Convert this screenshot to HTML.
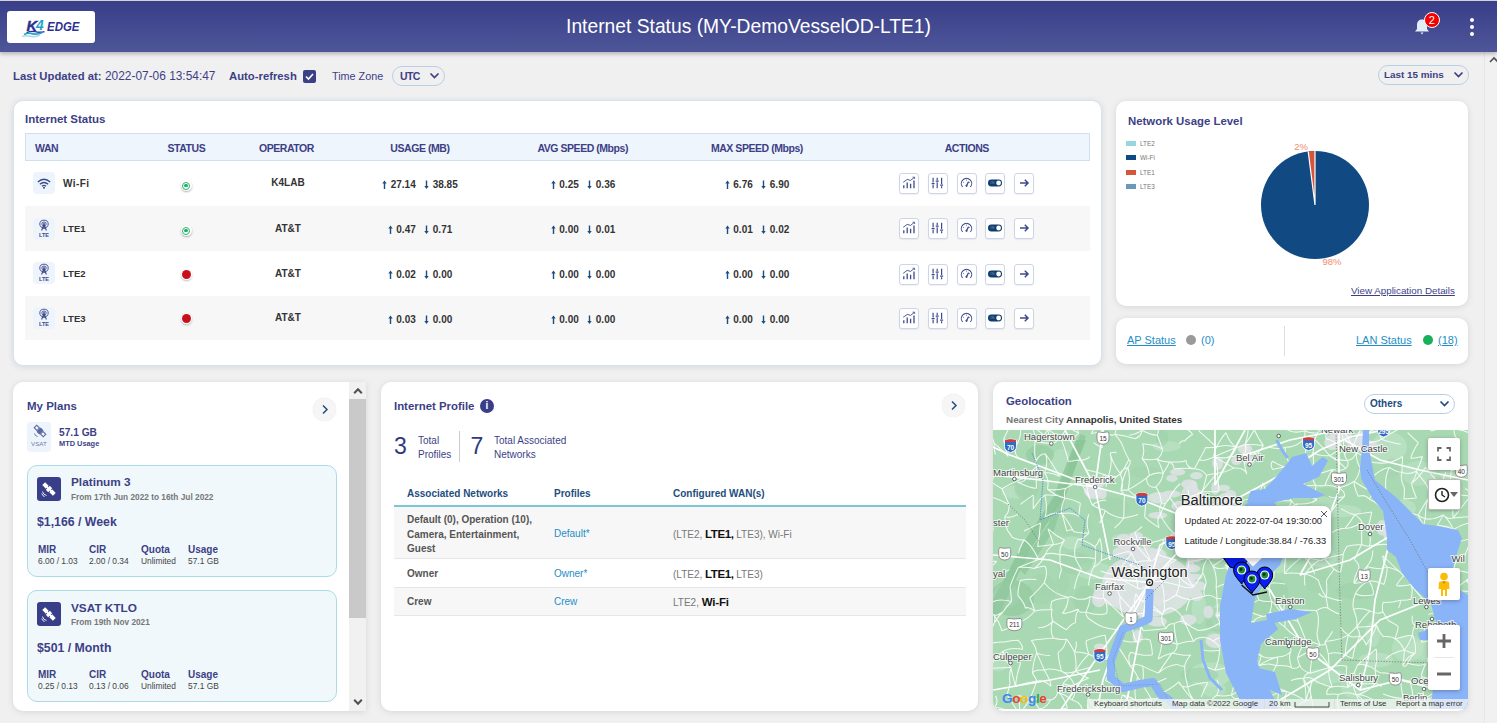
<!DOCTYPE html>
<html><head><meta charset="utf-8">
<style>
*{box-sizing:border-box;margin:0;padding:0}
html,body{width:1497px;height:723px;overflow:hidden}
body{background:#f0f0f0;font-family:"Liberation Sans",sans-serif;position:relative;color:#333}
.a{position:absolute;white-space:nowrap}
#topline{left:0;top:0;width:1497px;height:1px;background:#d8d8d8}
#hdr{left:0;top:1px;width:1497px;height:51px;background:linear-gradient(#383e88,#4e5699);box-shadow:0 2px 4px rgba(0,0,0,.25)}
#logo{left:7px;top:10px;width:88px;height:32px;background:#fff;border-radius:3px}
#title{left:0;top:13px;width:1497px;text-align:center;color:#fff;font-size:20.6px;line-height:24px;transform:scaleX(0.935);transform-origin:749px 0}
.card{position:absolute;background:#fff;border-radius:10px;box-shadow:0 1px 7px rgba(0,0,0,.11)}
.ttl{position:absolute;font-weight:bold;color:#3d3f86;font-size:11.5px;line-height:14px;white-space:nowrap}
#sb{left:1484px;top:52px;width:13px;height:671px;background:#f1f1f1;border-left:1px solid #e6e6e6}
.nv{color:#3d3f86}
.b{font-weight:bold}
/* table */
.th{position:absolute;top:133px;height:28px;left:25px;width:1065px;background:#eef5fc;border:1px solid #cfe0f1}
.thc{position:absolute;top:141.7px;font-size:10.5px;letter-spacing:-0.45px;font-weight:bold;color:#3d3f86;line-height:12px;white-space:nowrap}
.row{position:absolute;left:25px;width:1065px}
.g{background:#f7f7f7}
.wic{position:absolute;left:33px;width:22px;height:22px;background:#eef4fb;border-radius:4px}
.wn{position:absolute;left:63px;font-size:11px;font-weight:bold;color:#333;line-height:13px}
.dot{position:absolute;left:180.5px;width:11px;height:11px;border-radius:50%;background:#fff;box-shadow:0 1px 2px rgba(0,0,0,.3)}
.dot i{position:absolute;left:1.5px;top:1.5px;width:8px;height:8px;border-radius:50%;border:1.1px solid #22b565}.dot i:after{content:"";position:absolute;left:1.4px;top:1.4px;width:3.2px;height:3.2px;border-radius:50%;background:#1fae5f}
.dot.red{left:182px;width:9px;height:9px;background:#c8101a;box-shadow:0 0 0 1px #fff,0 1px 2px 1px rgba(0,0,0,.25)}
.op{position:absolute;font-size:10px;font-weight:bold;color:#333;line-height:12px;text-align:center;width:80px}
.num{position:absolute;font-size:10px;font-weight:bold;color:#333;line-height:12px;white-space:nowrap}
.ar{position:absolute;width:5px;height:9px}
.btn{position:absolute;width:20px;height:20.5px;border:1px solid #cfd5e8;border-radius:3px;background:#fff;box-shadow:0 1px 1px rgba(60,70,140,.08)}
</style></head><body>
<div id="topline" class="a"></div>
<div id="sb" class="a"><svg class="a" style="left:4px;top:4px" width="10" height="8" viewBox="0 0 10 8"><path d="M1 6 L5 2 L9 6" fill="none" stroke="#505050" stroke-width="1.6"/></svg></div>
<div id="hdr" class="a">
  <div id="logo" class="a">
    <svg width="88" height="32" viewBox="0 0 88 32">
      <text x="19.5" y="19.6" font-family="Liberation Sans" font-style="italic" font-weight="bold" font-size="14.8" fill="#2e3192" stroke="#2e3192" stroke-width="0.4">K</text>
      <text x="29" y="18.9" font-family="Liberation Sans" font-style="italic" font-weight="bold" font-size="13.8" fill="#1ea5c8">4</text>
      <text x="40" y="19.6" font-family="Liberation Sans" font-style="italic" font-weight="bold" font-size="13.4" fill="#2e3192" textLength="32.5" lengthAdjust="spacingAndGlyphs">EDGE</text>
      <path d="M19.5 21.8 Q24 19.8 28 20.6 Q33 21.8 37.5 20.6" fill="none" stroke="#2e3192" stroke-width="1.4"/>
      <path d="M17 23.6 Q21 21.6 25 22.6 Q30 24 35 21.8" fill="none" stroke="#1ea5c8" stroke-width="1.7"/>
      <path d="M15 25.6 Q19 24.2 23 25.2 Q28 26.6 33 24.2" fill="none" stroke="#a8d8f0" stroke-width="1.4"/>
    </svg>
  </div>
  <div id="title" class="a">Internet Status (MY-DemoVesselOD-LTE1)</div>
  <svg class="a" style="left:1412px;top:16px" width="20" height="20" viewBox="0 0 20 20">
    <path d="M10 2.5 C6.5 2.5 5 5 5 8 L5 12 L3 14.5 L17 14.5 L15 12 L15 8 C15 5 13.5 2.5 10 2.5 Z" fill="#e3edf8"/>
    <path d="M8.5 15.5 L11.5 15.5 L10 17.5 Z" fill="#e3edf8"/>
  </svg>
  <div class="a" style="left:1423.5px;top:10.5px;width:16.5px;height:16.5px;border-radius:50%;background:#f70000;border:1.3px solid #fff;color:#fff;font-size:11px;text-align:center;line-height:14px">2</div>
  <div class="a" style="left:1469.5px;top:16.5px;width:4px;height:4px;border-radius:50%;background:#fff"></div>
  <div class="a" style="left:1469.5px;top:23.5px;width:4px;height:4px;border-radius:50%;background:#fff"></div>
  <div class="a" style="left:1469.5px;top:30.5px;width:4px;height:4px;border-radius:50%;background:#fff"></div>
</div>

<!-- toolbar -->
<div class="a" style="left:13px;top:70px;font-size:11.3px;line-height:13px;color:#3d3f86"><b>Last Updated at:</b></div>
<div class="a" style="left:105px;top:70px;font-size:11.9px;line-height:13px;color:#3d3f86">2022-07-06 13:54:47</div>
<div class="a b" style="left:229px;top:70px;font-size:11.3px;line-height:13px;color:#3d3f86">Auto-refresh</div>
<div class="a" style="left:303px;top:70px;width:13px;height:13px;background:#3d3f86;border-radius:2px">
  <svg class="a" style="left:0;top:0" width="13" height="13" viewBox="0 0 13 13"><path d="M3 6.5 L5.5 9 L10 4" fill="none" stroke="#fff" stroke-width="1.6"/></svg>
</div>
<div class="a" style="left:332px;top:70px;font-size:10.8px;line-height:13px;color:#3d3f86">Time Zone</div>
<div class="a" style="left:392px;top:66px;width:53px;height:20px;border:1px solid #b9cfe6;border-radius:10px"></div>
<div class="a b" style="left:400px;top:70px;font-size:10.5px;line-height:12px;letter-spacing:-0.6px;color:#3d3f86">UTC</div>
<svg class="a" style="left:429px;top:72px" width="11" height="8" viewBox="0 0 11 8"><path d="M1.5 1.5 L5.5 5.5 L9.5 1.5" fill="none" stroke="#3d3f86" stroke-width="1.7"/></svg>

<div class="a" style="left:1378px;top:65px;width:91px;height:20px;border:1px solid #b9cfe6;border-radius:10px"></div>
<div class="a b" style="left:1384px;top:69px;font-size:9.9px;line-height:12px;color:#3d3f86">Last 15 mins</div>
<svg class="a" style="left:1453px;top:71px" width="11" height="8" viewBox="0 0 11 8"><path d="M1.5 1.5 L5.5 5.5 L9.5 1.5" fill="none" stroke="#3d3f86" stroke-width="1.7"/></svg>

<!-- ===== Internet Status card ===== -->
<div class="card" style="left:13px;top:100px;width:1089px;height:266px;border:1px solid #d5e3f1"></div>
<div class="ttl" style="left:25px;top:112px">Internet Status</div>
<div class="th"></div>
<div class="thc" style="left:35px">WAN</div>
<div class="thc" style="left:126.4px;width:120px;text-align:center">STATUS</div>
<div class="thc" style="left:226.5px;width:120px;text-align:center">OPERATOR</div>
<div class="thc" style="left:359.9px;width:120px;text-align:center">USAGE (MB)</div>
<div class="thc" style="left:522.7px;width:120px;text-align:center">AVG SPEED (Mbps)</div>
<div class="thc" style="left:696.9px;width:120px;text-align:center">MAX SPEED (Mbps)</div>
<div class="thc" style="left:906.8px;width:120px;text-align:center">ACTIONS</div>

<div class="row" style="top:206px;height:45px;background:#f7f7f7"></div>
<div class="row" style="top:296px;height:44px;background:#f7f7f7"></div>

<!-- ROWS -->
<div class="wic" style="top:172px"><svg class="a" style="left:4px;top:6px" width="14" height="11" viewBox="0 0 14 11"><path d="M0.8 4 Q7 -1.5 13.2 4" fill="none" stroke="#3d4a8a" stroke-width="1.4"/><path d="M2.8 6.2 Q7 2.6 11.2 6.2" fill="none" stroke="#3d4a8a" stroke-width="1.4"/><path d="M4.9 8.2 Q7 6.6 9.1 8.2" fill="none" stroke="#3d4a8a" stroke-width="1.4"/><circle cx="7" cy="9.8" r="1" fill="#3d4a8a"/></svg></div>
<div class="wn" style="top:176.7px;font-size:10px;letter-spacing:0.4px">Wi-Fi</div>
<div class="dot" style="top:180px"><i></i></div>
<div class="op" style="left:248px;top:177.4px">K4LAB</div>
<svg class="a" style="left:382.2px;top:179.89999999999998px" width="5" height="10" viewBox="0 0 5 10"><path d="M2.5 0.5 L0.3 3.5 L1.8 3.5 L1.8 9 L3.2 9 L3.2 3.5 L4.7 3.5 Z" fill="#1d4e7e"/></svg><div class="num" style="left:390.7px;top:178.7px">27.14</div><svg class="a" style="left:424.2px;top:179.89999999999998px" width="5" height="10" viewBox="0 0 5 10"><path d="M2.5 9 L0.3 6 L1.8 6 L1.8 0.5 L3.2 0.5 L3.2 6 L4.7 6 Z" fill="#1d4e7e"/></svg><div class="num" style="left:432.7px;top:178.7px">38.85</div>
<svg class="a" style="left:550.8px;top:179.89999999999998px" width="5" height="10" viewBox="0 0 5 10"><path d="M2.5 0.5 L0.3 3.5 L1.8 3.5 L1.8 9 L3.2 9 L3.2 3.5 L4.7 3.5 Z" fill="#1d4e7e"/></svg><div class="num" style="left:559.3px;top:178.7px">0.25</div><svg class="a" style="left:587.3px;top:179.89999999999998px" width="5" height="10" viewBox="0 0 5 10"><path d="M2.5 9 L0.3 6 L1.8 6 L1.8 0.5 L3.2 0.5 L3.2 6 L4.7 6 Z" fill="#1d4e7e"/></svg><div class="num" style="left:595.8px;top:178.7px">0.36</div>
<svg class="a" style="left:724.8px;top:179.89999999999998px" width="5" height="10" viewBox="0 0 5 10"><path d="M2.5 0.5 L0.3 3.5 L1.8 3.5 L1.8 9 L3.2 9 L3.2 3.5 L4.7 3.5 Z" fill="#1d4e7e"/></svg><div class="num" style="left:733.3px;top:178.7px">6.76</div><svg class="a" style="left:761.3px;top:179.89999999999998px" width="5" height="10" viewBox="0 0 5 10"><path d="M2.5 9 L0.3 6 L1.8 6 L1.8 0.5 L3.2 0.5 L3.2 6 L4.7 6 Z" fill="#1d4e7e"/></svg><div class="num" style="left:769.8px;top:178.7px">6.90</div>
<div class="btn" style="left:899px;top:173px"><svg class="a" style="left:2px;top:2px" width="14" height="14" viewBox="0 0 14 14"><path d="M1.8 12.2 V9.3 M5.2 12.2 V6.6 M8.6 12.2 V7.8 M12 12.2 V4.6" stroke="#3d4a8a" stroke-width="1.3"/><path d="M1.2 6.3 L5.2 3.4 L8.6 4.4 L12.2 1.5" fill="none" stroke="#3d4a8a" stroke-width="0.9"/><path d="M10.6 1.2 L12.6 1.2 L12.6 3" fill="none" stroke="#3d4a8a" stroke-width="0.8"/></svg></div>
<div class="btn" style="left:928px;top:173px"><svg class="a" style="left:2px;top:2px" width="14" height="14" viewBox="0 0 14 14"><path d="M2.1 1.8 V6.6 M2.1 8.8 V12.2 M6.2 1.8 V4.2 M6.2 6.3 V12.2 M10.6 1.8 V8 M10.6 10.2 V12.2" stroke="#3d4a8a" stroke-width="1.2"/><path d="M0.6 7.7 H3.6 M4.7 5.2 H7.7 M9.1 9.1 H12.1" stroke="#3d4a8a" stroke-width="1.3"/></svg></div>
<div class="btn" style="left:957px;top:173px"><svg class="a" style="left:2px;top:2px" width="14" height="14" viewBox="0 0 14 14"><path d="M2.6 11 A5.2 5.2 0 1 1 10.4 11" fill="none" stroke="#3d4a8a" stroke-width="1.1"/><path d="M6.5 9.6 L8.6 5.6" stroke="#3d4a8a" stroke-width="1.2"/><circle cx="6.5" cy="9.8" r="1.1" fill="#3d4a8a"/><path d="M3.2 6.2 L4 6.8 M6.5 3.6 V4.6 M9.8 6.2 L9 6.8" stroke="#3d4a8a" stroke-width="0.8"/></svg></div>
<div class="btn" style="left:985px;top:173px"><svg class="a" style="left:1px;top:4px" width="16" height="10" viewBox="0 0 16 10"><rect x="1" y="1.6" width="14" height="6.8" rx="3.4" fill="#0f3d6e"/><circle cx="11.6" cy="5" r="2.4" fill="#fff"/><text x="3" y="6.2" font-size="3" fill="#7f9ab8" font-family="Liberation Sans">ON</text></svg></div>
<div class="btn" style="left:1014px;top:173px"><svg class="a" style="left:3px;top:4px" width="12" height="10" viewBox="0 0 12 10"><path d="M2 5 H10 M6.8 1.8 L10 5 L6.8 8.2" fill="none" stroke="#3d4a8a" stroke-width="1.5"/></svg></div>
<div class="wic" style="top:218px"><svg class="a" style="left:0;top:0" width="22" height="22" viewBox="0 0 22 22"><ellipse cx="11" cy="6" rx="4.2" ry="3.8" fill="none" stroke="#3d4a8a" stroke-width="0.9"/><ellipse cx="11" cy="6" rx="2.2" ry="2" fill="none" stroke="#3d4a8a" stroke-width="0.9"/><circle cx="11" cy="6" r="0.9" fill="#3d4a8a"/><path d="M11 6.5 L8.6 12.5 M11 6.5 L13.4 12.5 M9.6 10.3 L12.4 10.3" stroke="#3d4a8a" stroke-width="1.1"/><text x="11" y="19.2" text-anchor="middle" font-family="Liberation Sans" font-weight="bold" font-size="5.6" fill="#3d4a8a">LTE</text></svg></div>
<div class="wn" style="top:222.2px;font-size:9.5px">LTE1</div>
<div class="dot" style="top:225px"><i></i></div>
<div class="op" style="left:248px;top:222.9px">AT&amp;T</div>
<svg class="a" style="left:387.8px;top:225.39999999999998px" width="5" height="10" viewBox="0 0 5 10"><path d="M2.5 0.5 L0.3 3.5 L1.8 3.5 L1.8 9 L3.2 9 L3.2 3.5 L4.7 3.5 Z" fill="#1d4e7e"/></svg><div class="num" style="left:396.3px;top:224.2px">0.47</div><svg class="a" style="left:424.3px;top:225.39999999999998px" width="5" height="10" viewBox="0 0 5 10"><path d="M2.5 9 L0.3 6 L1.8 6 L1.8 0.5 L3.2 0.5 L3.2 6 L4.7 6 Z" fill="#1d4e7e"/></svg><div class="num" style="left:432.8px;top:224.2px">0.71</div>
<svg class="a" style="left:550.8px;top:225.39999999999998px" width="5" height="10" viewBox="0 0 5 10"><path d="M2.5 0.5 L0.3 3.5 L1.8 3.5 L1.8 9 L3.2 9 L3.2 3.5 L4.7 3.5 Z" fill="#1d4e7e"/></svg><div class="num" style="left:559.3px;top:224.2px">0.00</div><svg class="a" style="left:587.3px;top:225.39999999999998px" width="5" height="10" viewBox="0 0 5 10"><path d="M2.5 9 L0.3 6 L1.8 6 L1.8 0.5 L3.2 0.5 L3.2 6 L4.7 6 Z" fill="#1d4e7e"/></svg><div class="num" style="left:595.8px;top:224.2px">0.01</div>
<svg class="a" style="left:724.8px;top:225.39999999999998px" width="5" height="10" viewBox="0 0 5 10"><path d="M2.5 0.5 L0.3 3.5 L1.8 3.5 L1.8 9 L3.2 9 L3.2 3.5 L4.7 3.5 Z" fill="#1d4e7e"/></svg><div class="num" style="left:733.3px;top:224.2px">0.01</div><svg class="a" style="left:761.3px;top:225.39999999999998px" width="5" height="10" viewBox="0 0 5 10"><path d="M2.5 9 L0.3 6 L1.8 6 L1.8 0.5 L3.2 0.5 L3.2 6 L4.7 6 Z" fill="#1d4e7e"/></svg><div class="num" style="left:769.8px;top:224.2px">0.02</div>
<div class="btn" style="left:899px;top:218px"><svg class="a" style="left:2px;top:2px" width="14" height="14" viewBox="0 0 14 14"><path d="M1.8 12.2 V9.3 M5.2 12.2 V6.6 M8.6 12.2 V7.8 M12 12.2 V4.6" stroke="#3d4a8a" stroke-width="1.3"/><path d="M1.2 6.3 L5.2 3.4 L8.6 4.4 L12.2 1.5" fill="none" stroke="#3d4a8a" stroke-width="0.9"/><path d="M10.6 1.2 L12.6 1.2 L12.6 3" fill="none" stroke="#3d4a8a" stroke-width="0.8"/></svg></div>
<div class="btn" style="left:928px;top:218px"><svg class="a" style="left:2px;top:2px" width="14" height="14" viewBox="0 0 14 14"><path d="M2.1 1.8 V6.6 M2.1 8.8 V12.2 M6.2 1.8 V4.2 M6.2 6.3 V12.2 M10.6 1.8 V8 M10.6 10.2 V12.2" stroke="#3d4a8a" stroke-width="1.2"/><path d="M0.6 7.7 H3.6 M4.7 5.2 H7.7 M9.1 9.1 H12.1" stroke="#3d4a8a" stroke-width="1.3"/></svg></div>
<div class="btn" style="left:957px;top:218px"><svg class="a" style="left:2px;top:2px" width="14" height="14" viewBox="0 0 14 14"><path d="M2.6 11 A5.2 5.2 0 1 1 10.4 11" fill="none" stroke="#3d4a8a" stroke-width="1.1"/><path d="M6.5 9.6 L8.6 5.6" stroke="#3d4a8a" stroke-width="1.2"/><circle cx="6.5" cy="9.8" r="1.1" fill="#3d4a8a"/><path d="M3.2 6.2 L4 6.8 M6.5 3.6 V4.6 M9.8 6.2 L9 6.8" stroke="#3d4a8a" stroke-width="0.8"/></svg></div>
<div class="btn" style="left:985px;top:218px"><svg class="a" style="left:1px;top:4px" width="16" height="10" viewBox="0 0 16 10"><rect x="1" y="1.6" width="14" height="6.8" rx="3.4" fill="#0f3d6e"/><circle cx="11.6" cy="5" r="2.4" fill="#fff"/><text x="3" y="6.2" font-size="3" fill="#7f9ab8" font-family="Liberation Sans">ON</text></svg></div>
<div class="btn" style="left:1014px;top:218px"><svg class="a" style="left:3px;top:4px" width="12" height="10" viewBox="0 0 12 10"><path d="M2 5 H10 M6.8 1.8 L10 5 L6.8 8.2" fill="none" stroke="#3d4a8a" stroke-width="1.5"/></svg></div>
<div class="wic" style="top:262px"><svg class="a" style="left:0;top:0" width="22" height="22" viewBox="0 0 22 22"><ellipse cx="11" cy="6" rx="4.2" ry="3.8" fill="none" stroke="#3d4a8a" stroke-width="0.9"/><ellipse cx="11" cy="6" rx="2.2" ry="2" fill="none" stroke="#3d4a8a" stroke-width="0.9"/><circle cx="11" cy="6" r="0.9" fill="#3d4a8a"/><path d="M11 6.5 L8.6 12.5 M11 6.5 L13.4 12.5 M9.6 10.3 L12.4 10.3" stroke="#3d4a8a" stroke-width="1.1"/><text x="11" y="19.2" text-anchor="middle" font-family="Liberation Sans" font-weight="bold" font-size="5.6" fill="#3d4a8a">LTE</text></svg></div>
<div class="wn" style="top:267.2px;font-size:9.5px">LTE2</div>
<div class="dot red" style="top:270px"></div>
<div class="op" style="left:248px;top:267.9px">AT&amp;T</div>
<svg class="a" style="left:387.8px;top:270.4px" width="5" height="10" viewBox="0 0 5 10"><path d="M2.5 0.5 L0.3 3.5 L1.8 3.5 L1.8 9 L3.2 9 L3.2 3.5 L4.7 3.5 Z" fill="#1d4e7e"/></svg><div class="num" style="left:396.3px;top:269.2px">0.02</div><svg class="a" style="left:424.3px;top:270.4px" width="5" height="10" viewBox="0 0 5 10"><path d="M2.5 9 L0.3 6 L1.8 6 L1.8 0.5 L3.2 0.5 L3.2 6 L4.7 6 Z" fill="#1d4e7e"/></svg><div class="num" style="left:432.8px;top:269.2px">0.00</div>
<svg class="a" style="left:550.8px;top:270.4px" width="5" height="10" viewBox="0 0 5 10"><path d="M2.5 0.5 L0.3 3.5 L1.8 3.5 L1.8 9 L3.2 9 L3.2 3.5 L4.7 3.5 Z" fill="#1d4e7e"/></svg><div class="num" style="left:559.3px;top:269.2px">0.00</div><svg class="a" style="left:587.3px;top:270.4px" width="5" height="10" viewBox="0 0 5 10"><path d="M2.5 9 L0.3 6 L1.8 6 L1.8 0.5 L3.2 0.5 L3.2 6 L4.7 6 Z" fill="#1d4e7e"/></svg><div class="num" style="left:595.8px;top:269.2px">0.00</div>
<svg class="a" style="left:724.8px;top:270.4px" width="5" height="10" viewBox="0 0 5 10"><path d="M2.5 0.5 L0.3 3.5 L1.8 3.5 L1.8 9 L3.2 9 L3.2 3.5 L4.7 3.5 Z" fill="#1d4e7e"/></svg><div class="num" style="left:733.3px;top:269.2px">0.00</div><svg class="a" style="left:761.3px;top:270.4px" width="5" height="10" viewBox="0 0 5 10"><path d="M2.5 9 L0.3 6 L1.8 6 L1.8 0.5 L3.2 0.5 L3.2 6 L4.7 6 Z" fill="#1d4e7e"/></svg><div class="num" style="left:769.8px;top:269.2px">0.00</div>
<div class="btn" style="left:899px;top:264px"><svg class="a" style="left:2px;top:2px" width="14" height="14" viewBox="0 0 14 14"><path d="M1.8 12.2 V9.3 M5.2 12.2 V6.6 M8.6 12.2 V7.8 M12 12.2 V4.6" stroke="#3d4a8a" stroke-width="1.3"/><path d="M1.2 6.3 L5.2 3.4 L8.6 4.4 L12.2 1.5" fill="none" stroke="#3d4a8a" stroke-width="0.9"/><path d="M10.6 1.2 L12.6 1.2 L12.6 3" fill="none" stroke="#3d4a8a" stroke-width="0.8"/></svg></div>
<div class="btn" style="left:928px;top:264px"><svg class="a" style="left:2px;top:2px" width="14" height="14" viewBox="0 0 14 14"><path d="M2.1 1.8 V6.6 M2.1 8.8 V12.2 M6.2 1.8 V4.2 M6.2 6.3 V12.2 M10.6 1.8 V8 M10.6 10.2 V12.2" stroke="#3d4a8a" stroke-width="1.2"/><path d="M0.6 7.7 H3.6 M4.7 5.2 H7.7 M9.1 9.1 H12.1" stroke="#3d4a8a" stroke-width="1.3"/></svg></div>
<div class="btn" style="left:957px;top:264px"><svg class="a" style="left:2px;top:2px" width="14" height="14" viewBox="0 0 14 14"><path d="M2.6 11 A5.2 5.2 0 1 1 10.4 11" fill="none" stroke="#3d4a8a" stroke-width="1.1"/><path d="M6.5 9.6 L8.6 5.6" stroke="#3d4a8a" stroke-width="1.2"/><circle cx="6.5" cy="9.8" r="1.1" fill="#3d4a8a"/><path d="M3.2 6.2 L4 6.8 M6.5 3.6 V4.6 M9.8 6.2 L9 6.8" stroke="#3d4a8a" stroke-width="0.8"/></svg></div>
<div class="btn" style="left:985px;top:264px"><svg class="a" style="left:1px;top:4px" width="16" height="10" viewBox="0 0 16 10"><rect x="1" y="1.6" width="14" height="6.8" rx="3.4" fill="#0f3d6e"/><circle cx="11.6" cy="5" r="2.4" fill="#fff"/><text x="3" y="6.2" font-size="3" fill="#7f9ab8" font-family="Liberation Sans">ON</text></svg></div>
<div class="btn" style="left:1014px;top:264px"><svg class="a" style="left:3px;top:4px" width="12" height="10" viewBox="0 0 12 10"><path d="M2 5 H10 M6.8 1.8 L10 5 L6.8 8.2" fill="none" stroke="#3d4a8a" stroke-width="1.5"/></svg></div>
<div class="wic" style="top:307px"><svg class="a" style="left:0;top:0" width="22" height="22" viewBox="0 0 22 22"><ellipse cx="11" cy="6" rx="4.2" ry="3.8" fill="none" stroke="#3d4a8a" stroke-width="0.9"/><ellipse cx="11" cy="6" rx="2.2" ry="2" fill="none" stroke="#3d4a8a" stroke-width="0.9"/><circle cx="11" cy="6" r="0.9" fill="#3d4a8a"/><path d="M11 6.5 L8.6 12.5 M11 6.5 L13.4 12.5 M9.6 10.3 L12.4 10.3" stroke="#3d4a8a" stroke-width="1.1"/><text x="11" y="19.2" text-anchor="middle" font-family="Liberation Sans" font-weight="bold" font-size="5.6" fill="#3d4a8a">LTE</text></svg></div>
<div class="wn" style="top:311.7px;font-size:9.5px">LTE3</div>
<div class="dot red" style="top:314px"></div>
<div class="op" style="left:248px;top:312.4px">AT&amp;T</div>
<svg class="a" style="left:387.8px;top:314.9px" width="5" height="10" viewBox="0 0 5 10"><path d="M2.5 0.5 L0.3 3.5 L1.8 3.5 L1.8 9 L3.2 9 L3.2 3.5 L4.7 3.5 Z" fill="#1d4e7e"/></svg><div class="num" style="left:396.3px;top:313.7px">0.03</div><svg class="a" style="left:424.3px;top:314.9px" width="5" height="10" viewBox="0 0 5 10"><path d="M2.5 9 L0.3 6 L1.8 6 L1.8 0.5 L3.2 0.5 L3.2 6 L4.7 6 Z" fill="#1d4e7e"/></svg><div class="num" style="left:432.8px;top:313.7px">0.00</div>
<svg class="a" style="left:550.8px;top:314.9px" width="5" height="10" viewBox="0 0 5 10"><path d="M2.5 0.5 L0.3 3.5 L1.8 3.5 L1.8 9 L3.2 9 L3.2 3.5 L4.7 3.5 Z" fill="#1d4e7e"/></svg><div class="num" style="left:559.3px;top:313.7px">0.00</div><svg class="a" style="left:587.3px;top:314.9px" width="5" height="10" viewBox="0 0 5 10"><path d="M2.5 9 L0.3 6 L1.8 6 L1.8 0.5 L3.2 0.5 L3.2 6 L4.7 6 Z" fill="#1d4e7e"/></svg><div class="num" style="left:595.8px;top:313.7px">0.00</div>
<svg class="a" style="left:724.8px;top:314.9px" width="5" height="10" viewBox="0 0 5 10"><path d="M2.5 0.5 L0.3 3.5 L1.8 3.5 L1.8 9 L3.2 9 L3.2 3.5 L4.7 3.5 Z" fill="#1d4e7e"/></svg><div class="num" style="left:733.3px;top:313.7px">0.00</div><svg class="a" style="left:761.3px;top:314.9px" width="5" height="10" viewBox="0 0 5 10"><path d="M2.5 9 L0.3 6 L1.8 6 L1.8 0.5 L3.2 0.5 L3.2 6 L4.7 6 Z" fill="#1d4e7e"/></svg><div class="num" style="left:769.8px;top:313.7px">0.00</div>
<div class="btn" style="left:899px;top:308px"><svg class="a" style="left:2px;top:2px" width="14" height="14" viewBox="0 0 14 14"><path d="M1.8 12.2 V9.3 M5.2 12.2 V6.6 M8.6 12.2 V7.8 M12 12.2 V4.6" stroke="#3d4a8a" stroke-width="1.3"/><path d="M1.2 6.3 L5.2 3.4 L8.6 4.4 L12.2 1.5" fill="none" stroke="#3d4a8a" stroke-width="0.9"/><path d="M10.6 1.2 L12.6 1.2 L12.6 3" fill="none" stroke="#3d4a8a" stroke-width="0.8"/></svg></div>
<div class="btn" style="left:928px;top:308px"><svg class="a" style="left:2px;top:2px" width="14" height="14" viewBox="0 0 14 14"><path d="M2.1 1.8 V6.6 M2.1 8.8 V12.2 M6.2 1.8 V4.2 M6.2 6.3 V12.2 M10.6 1.8 V8 M10.6 10.2 V12.2" stroke="#3d4a8a" stroke-width="1.2"/><path d="M0.6 7.7 H3.6 M4.7 5.2 H7.7 M9.1 9.1 H12.1" stroke="#3d4a8a" stroke-width="1.3"/></svg></div>
<div class="btn" style="left:957px;top:308px"><svg class="a" style="left:2px;top:2px" width="14" height="14" viewBox="0 0 14 14"><path d="M2.6 11 A5.2 5.2 0 1 1 10.4 11" fill="none" stroke="#3d4a8a" stroke-width="1.1"/><path d="M6.5 9.6 L8.6 5.6" stroke="#3d4a8a" stroke-width="1.2"/><circle cx="6.5" cy="9.8" r="1.1" fill="#3d4a8a"/><path d="M3.2 6.2 L4 6.8 M6.5 3.6 V4.6 M9.8 6.2 L9 6.8" stroke="#3d4a8a" stroke-width="0.8"/></svg></div>
<div class="btn" style="left:985px;top:308px"><svg class="a" style="left:1px;top:4px" width="16" height="10" viewBox="0 0 16 10"><rect x="1" y="1.6" width="14" height="6.8" rx="3.4" fill="#0f3d6e"/><circle cx="11.6" cy="5" r="2.4" fill="#fff"/><text x="3" y="6.2" font-size="3" fill="#7f9ab8" font-family="Liberation Sans">ON</text></svg></div>
<div class="btn" style="left:1014px;top:308px"><svg class="a" style="left:3px;top:4px" width="12" height="10" viewBox="0 0 12 10"><path d="M2 5 H10 M6.8 1.8 L10 5 L6.8 8.2" fill="none" stroke="#3d4a8a" stroke-width="1.5"/></svg></div>
<!-- /ROWS -->


<!-- ===== Network Usage card ===== -->
<div class="card" style="left:1116px;top:101px;width:352px;height:204.5px"></div>
<div class="ttl" style="left:1128px;top:114px;font-size:11.4px">Network Usage Level</div>
<div class="a" style="left:1126px;top:141px;width:10px;height:5px;background:#97d6df"></div>
<div class="a" style="left:1140px;top:139px;font-size:6.4px;line-height:9px;color:#777">LTE2</div>
<div class="a" style="left:1126px;top:155px;width:10px;height:5px;background:#114a82"></div>
<div class="a" style="left:1140px;top:153px;font-size:6.4px;line-height:9px;color:#777">Wi-Fi</div>
<div class="a" style="left:1126px;top:170px;width:10px;height:5px;background:#d4563c"></div>
<div class="a" style="left:1140px;top:168px;font-size:6.4px;line-height:9px;color:#777">LTE1</div>
<div class="a" style="left:1126px;top:184px;width:10px;height:5px;background:#6b9ab8"></div>
<div class="a" style="left:1140px;top:182px;font-size:6.4px;line-height:9px;color:#777">LTE3</div>
<svg class="a" style="left:1255px;top:138px" width="120" height="132" viewBox="0 0 120 132">
  <circle cx="60" cy="67" r="54" fill="#114a82"/>
  <path d="M60 67 L60 13 A54 54 0 0 0 53.2 13.4 Z" fill="#d4563c"/>
  <path d="M60 67 L60 13 M60 67 L53.2 13.4" stroke="#fff" stroke-width="1.2"/>
  <text x="46" y="12" font-family="Liberation Sans" font-size="9.5" fill="#f28b6c" text-anchor="middle">2%</text>
  <text x="77" y="127" font-family="Liberation Sans" font-size="9.5" fill="#f28b6c" text-anchor="middle">98%</text>
</svg>
<div class="a" style="left:1351px;top:285px;font-size:9.8px;line-height:12px;color:#3d3f86;text-decoration:underline">View Application Details</div>

<!-- ===== AP / LAN status ===== -->
<div class="card" style="left:1116px;top:318px;width:352px;height:46px"></div>
<div class="a" style="left:1127px;top:334px;font-size:11px;line-height:13px;color:#1f8ec6;text-decoration:underline">AP Status</div>
<div class="a" style="left:1186px;top:335px;width:10px;height:10px;border-radius:50%;background:#9a9a9a"></div>
<div class="a" style="left:1201px;top:334px;font-size:11px;line-height:13px;color:#1f8ec6">(0)</div>
<div class="a" style="left:1284px;top:326px;width:1px;height:30px;background:#ddd"></div>
<div class="a" style="left:1356px;top:334px;font-size:11px;line-height:13px;color:#1f8ec6;text-decoration:underline">LAN Status</div>
<div class="a" style="left:1423px;top:335px;width:10px;height:10px;border-radius:50%;background:#17b15a"></div>
<div class="a" style="left:1438px;top:334px;font-size:11px;line-height:13px;color:#1f8ec6;text-decoration:underline">(18)</div>

<!-- ===== My Plans ===== -->
<div class="card" style="left:13px;top:382px;width:353px;height:329px;overflow:hidden;border-radius:10px 0 0 10px">
  <div class="a" style="left:336px;top:0;width:17px;height:329px;background:#f1f1f1"></div>
  <div class="a" style="left:336px;top:17px;width:17px;height:219px;background:#c9c9c9"></div>
  <svg class="a" style="left:340px;top:5px" width="10" height="8" viewBox="0 0 10 8"><path d="M1.2 6.2 L5 2.2 L8.8 6.2" fill="none" stroke="#505050" stroke-width="2"/></svg>
  <svg class="a" style="left:340px;top:316px" width="10" height="8" viewBox="0 0 10 8"><path d="M1.2 1.8 L5 5.8 L8.8 1.8" fill="none" stroke="#505050" stroke-width="2"/></svg>
</div>
<div class="ttl" style="left:27px;top:399px;font-size:11.5px">My Plans</div>
<div class="a" style="left:313px;top:398px;width:23px;height:23px;border-radius:50%;background:#f6f6f6;box-shadow:0 0 1px rgba(0,0,0,.15)">
  <svg class="a" style="left:7px;top:6px" width="10" height="11" viewBox="0 0 10 11"><path d="M3 1.5 L7 5.5 L3 9.5" fill="none" stroke="#1d4e7e" stroke-width="1.5"/></svg>
</div>
<div class="a" style="left:27px;top:422px;width:24px;height:30px;background:#eef4fb;border-radius:3px"><svg class="a" style="left:5.5px;top:2px" width="14" height="14" viewBox="0 0 14 14"><g transform="rotate(-45 7 7)" fill="none" stroke="#5a6aa0" stroke-width="1.1"><rect x="5.2" y="0.6" width="3.6" height="4" /><rect x="5.2" y="9.4" width="3.6" height="4"/><rect x="4.6" y="5.6" width="4.8" height="2.8" fill="#5a6aa0"/></g><path d="M1.5 9.5 Q2 12 4.5 12.5" fill="none" stroke="#5a6aa0" stroke-width="0.9"/></svg>
  <div class="a" style="left:4px;top:18px;font-size:6.2px;line-height:8px;color:#6a78a8">VSAT</div>
</div>
<div class="a b" style="left:59px;top:427px;font-size:10.2px;line-height:12px;color:#3d3f86">57.1 GB</div>
<div class="a b" style="left:59px;top:439px;font-size:7.4px;line-height:10px;color:#3d3f86">MTD Usage</div>

<!-- plan 1 -->
<div class="a" style="left:27px;top:465px;width:310px;height:112px;background:#f0f8fb;border:1px solid #a9dbe8;border-radius:10px"></div>
<div class="a" style="left:37px;top:477px;width:24px;height:24px;background:#383e88;border-radius:3px"><svg class="a" style="left:4px;top:4px" width="16" height="16" viewBox="0 0 16 16"><g transform="rotate(-45 8 8)" fill="#fff"><rect x="6" y="0.5" width="4" height="5"/><rect x="6" y="10.5" width="4" height="5"/><rect x="5.2" y="6.3" width="5.6" height="3.4"/><rect x="7.2" y="4" width="1.6" height="8"/></g><path d="M1.5 10.5 Q2.2 13.8 5.5 14.5 M0.8 12.5 Q1.6 15.2 3.6 15.6" fill="none" stroke="#fff" stroke-width="0.9"/></svg></div>
<div class="a b" style="left:71px;top:475px;font-size:11.8px;line-height:14px;color:#3d3f86">Platinum 3</div>
<div class="a b" style="left:71px;top:492px;font-size:8.3px;line-height:11px;color:#777">From 17th Jun 2022 to 16th Jul 2022</div>
<div class="a b" style="left:37px;top:515px;font-size:12.3px;line-height:15px;color:#3d3f86">$1,166 / Week</div>
<div class="a b" style="left:38px;top:543.5px;font-size:10px;line-height:12px;color:#3d3f86">MIR</div>
<div class="a b" style="left:89px;top:543.5px;font-size:10px;line-height:12px;color:#3d3f86">CIR</div>
<div class="a b" style="left:141px;top:543.5px;font-size:10px;line-height:12px;color:#3d3f86">Quota</div>
<div class="a b" style="left:188px;top:543.5px;font-size:10px;line-height:12px;color:#3d3f86">Usage</div>
<div class="a" style="left:38px;top:556px;font-size:8.4px;line-height:11px;color:#444">6.00 / 1.03</div>
<div class="a" style="left:89px;top:556px;font-size:8.4px;line-height:11px;color:#444">2.00 / 0.34</div>
<div class="a" style="left:141px;top:556px;font-size:8.4px;line-height:11px;color:#444">Unlimited</div>
<div class="a" style="left:188px;top:556px;font-size:8.4px;line-height:11px;color:#444">57.1 GB</div>

<!-- plan 2 -->
<div class="a" style="left:27px;top:590px;width:310px;height:112px;background:#f0f8fb;border:1px solid #a9dbe8;border-radius:10px"></div>
<div class="a" style="left:37px;top:602px;width:24px;height:24px;background:#383e88;border-radius:3px"><svg class="a" style="left:4px;top:4px" width="16" height="16" viewBox="0 0 16 16"><g transform="rotate(-45 8 8)" fill="#fff"><rect x="6" y="0.5" width="4" height="5"/><rect x="6" y="10.5" width="4" height="5"/><rect x="5.2" y="6.3" width="5.6" height="3.4"/><rect x="7.2" y="4" width="1.6" height="8"/></g><path d="M1.5 10.5 Q2.2 13.8 5.5 14.5 M0.8 12.5 Q1.6 15.2 3.6 15.6" fill="none" stroke="#fff" stroke-width="0.9"/></svg></div>
<div class="a b" style="left:71px;top:601px;font-size:11.8px;line-height:14px;color:#3d3f86">VSAT KTLO</div>
<div class="a b" style="left:71px;top:617px;font-size:8.3px;line-height:11px;color:#777">From 19th Nov 2021</div>
<div class="a b" style="left:37px;top:641px;font-size:12.3px;line-height:15px;color:#3d3f86">$501 / Month</div>
<div class="a b" style="left:38px;top:668.5px;font-size:10px;line-height:12px;color:#3d3f86">MIR</div>
<div class="a b" style="left:89px;top:668.5px;font-size:10px;line-height:12px;color:#3d3f86">CIR</div>
<div class="a b" style="left:141px;top:668.5px;font-size:10px;line-height:12px;color:#3d3f86">Quota</div>
<div class="a b" style="left:188px;top:668.5px;font-size:10px;line-height:12px;color:#3d3f86">Usage</div>
<div class="a" style="left:38px;top:681px;font-size:8.4px;line-height:11px;color:#444">0.25 / 0.13</div>
<div class="a" style="left:89px;top:681px;font-size:8.4px;line-height:11px;color:#444">0.13 / 0.06</div>
<div class="a" style="left:141px;top:681px;font-size:8.4px;line-height:11px;color:#444">Unlimited</div>
<div class="a" style="left:188px;top:681px;font-size:8.4px;line-height:11px;color:#444">57.1 GB</div>

<!-- ===== Internet Profile ===== -->
<div class="card" style="left:381px;top:382px;width:597px;height:329px"></div>
<div class="ttl" style="left:394px;top:399px;font-size:11.4px">Internet Profile</div>
<div class="a" style="left:480px;top:399px;width:14px;height:14px;border-radius:50%;background:#383e88;color:#fff;font-size:10px;font-weight:bold;text-align:center;line-height:14px">i</div>
<div class="a" style="left:942px;top:394px;width:23px;height:23px;border-radius:50%;background:#f6f6f6;box-shadow:0 0 1px rgba(0,0,0,.15)">
  <svg class="a" style="left:7px;top:6px" width="10" height="11" viewBox="0 0 10 11"><path d="M3 1.5 L7 5.5 L3 9.5" fill="none" stroke="#1d4e7e" stroke-width="1.5"/></svg>
</div>
<div class="a" style="left:394px;top:433px;font-size:23px;line-height:26px;color:#2d3a80">3</div>
<div class="a" style="left:418px;top:434px;font-size:10px;line-height:13.5px;color:#3d3f86;white-space:normal">Total<br>Profiles</div>
<div class="a" style="left:459px;top:431px;width:1px;height:31px;background:#ccc"></div>
<div class="a" style="left:470.5px;top:433px;font-size:23px;line-height:26px;color:#2d3a80">7</div>
<div class="a" style="left:494px;top:434px;font-size:10px;line-height:13.5px;color:#3d3f86;white-space:normal">Total Associated<br>Networks</div>

<div class="a b" style="left:407px;top:488px;font-size:10px;line-height:12px;color:#1d4e7e">Associated Networks</div>
<div class="a b" style="left:554px;top:488px;font-size:10px;line-height:12px;color:#1d4e7e">Profiles</div>
<div class="a b" style="left:673px;top:488px;font-size:10px;line-height:12px;color:#1d4e7e">Configured WAN(s)</div>
<div class="a" style="left:394px;top:505px;width:572px;height:2px;background:#7cc7d3"></div>
<div class="a" style="left:394px;top:507px;width:572px;height:52px;background:#f7f7f7;border-bottom:1px solid #e6e6e6"></div>
<div class="a" style="left:394px;top:559px;width:572px;height:29px;background:#fff;border-bottom:1px solid #e6e6e6"></div>
<div class="a" style="left:394px;top:588px;width:572px;height:28px;background:#f7f7f7;border-bottom:1px solid #e6e6e6"></div>
<div class="a b" style="left:407px;top:513px;font-size:10px;line-height:14.5px;color:#555">Default (0), Operation (10),<br>Camera, Entertainment,<br>Guest</div>
<div class="a" style="left:554px;top:528px;font-size:10px;line-height:12px;color:#1f8ec6">Default*</div>
<div class="a" style="left:673px;top:528px;font-size:10px;line-height:12px;color:#777">(LTE2, <span style="color:#111;font-size:11.5px;font-weight:bold;letter-spacing:-0.4px">LTE1,</span> LTE3), Wi-Fi</div>
<div class="a b" style="left:407px;top:568px;font-size:10px;line-height:12px;color:#555">Owner</div>
<div class="a" style="left:554px;top:568px;font-size:10px;line-height:12px;color:#1f8ec6">Owner*</div>
<div class="a" style="left:673px;top:568px;font-size:10px;line-height:12px;color:#777">(LTE2, <span style="color:#111;font-size:11.5px;font-weight:bold;letter-spacing:-0.4px">LTE1,</span> LTE3)</div>
<div class="a b" style="left:407px;top:596px;font-size:10px;line-height:12px;color:#555">Crew</div>
<div class="a" style="left:554px;top:596px;font-size:10px;line-height:12px;color:#1f8ec6">Crew</div>
<div class="a" style="left:673px;top:596px;font-size:10px;line-height:12px;color:#777">LTE2, <span style="color:#111;font-size:11.5px;font-weight:bold;letter-spacing:-0.2px">Wi-Fi</span></div>

<!-- ===== Geolocation ===== -->
<div class="card" style="left:993px;top:382px;width:475px;height:329px;overflow:hidden">
  <div class="a" style="left:0;top:48px;width:475px;height:279px;background:#acd9b5;overflow:hidden"><!-- MAP --><svg class="a" style="left:0;top:0" width="475" height="281" viewBox="0 0 475 281"><rect width="475" height="281" fill="#a9d9b3"/><ellipse cx="153.8" cy="42.4" rx="16.4" ry="5.8" fill="#a3d3ad" opacity="0.6"/><ellipse cx="173.7" cy="16.3" rx="14.1" ry="5.4" fill="#c2e5c9" opacity="0.6"/><ellipse cx="198.6" cy="67.6" rx="14.8" ry="5.7" fill="#a3d3ad" opacity="0.6"/><ellipse cx="450.0" cy="177.2" rx="15.3" ry="5.7" fill="#c2e5c9" opacity="0.6"/><ellipse cx="23.6" cy="62.1" rx="14.9" ry="6.5" fill="#c2e5c9" opacity="0.6"/><ellipse cx="68.5" cy="33.1" rx="10.9" ry="14.0" fill="#bde2c4" opacity="0.6"/><ellipse cx="49.0" cy="160.5" rx="9.0" ry="6.1" fill="#a3d3ad" opacity="0.6"/><ellipse cx="268.1" cy="173.9" rx="13.9" ry="10.8" fill="#9fd0aa" opacity="0.6"/><ellipse cx="221.2" cy="259.5" rx="11.8" ry="7.7" fill="#bde2c4" opacity="0.6"/><ellipse cx="332.0" cy="68.6" rx="15.2" ry="10.8" fill="#9fd0aa" opacity="0.6"/><ellipse cx="346.5" cy="80.9" rx="21.7" ry="6.3" fill="#c2e5c9" opacity="0.6"/><ellipse cx="78.4" cy="96.1" rx="20.9" ry="9.6" fill="#a3d3ad" opacity="0.6"/><ellipse cx="363.2" cy="161.0" rx="20.0" ry="8.5" fill="#9fd0aa" opacity="0.6"/><ellipse cx="282.3" cy="163.0" rx="13.3" ry="14.2" fill="#9fd0aa" opacity="0.6"/><ellipse cx="225.2" cy="186.6" rx="7.0" ry="12.7" fill="#c2e5c9" opacity="0.6"/><ellipse cx="135.2" cy="108.4" rx="16.7" ry="5.2" fill="#c2e5c9" opacity="0.6"/><ellipse cx="168.8" cy="171.7" rx="13.9" ry="7.4" fill="#9fd0aa" opacity="0.6"/><ellipse cx="61.4" cy="69.6" rx="12.3" ry="14.6" fill="#a3d3ad" opacity="0.6"/><ellipse cx="79.0" cy="112.9" rx="10.4" ry="6.5" fill="#c2e5c9" opacity="0.6"/><ellipse cx="410.4" cy="78.2" rx="12.6" ry="8.9" fill="#c2e5c9" opacity="0.6"/><ellipse cx="454.9" cy="42.4" rx="8.8" ry="7.6" fill="#bde2c4" opacity="0.6"/><ellipse cx="5.7" cy="233.5" rx="8.9" ry="8.1" fill="#bde2c4" opacity="0.6"/><ellipse cx="199.0" cy="103.8" rx="15.1" ry="15.5" fill="#a3d3ad" opacity="0.6"/><ellipse cx="216.9" cy="244.7" rx="21.2" ry="12.5" fill="#c2e5c9" opacity="0.6"/><ellipse cx="189.1" cy="110.7" rx="13.7" ry="9.4" fill="#bde2c4" opacity="0.6"/><ellipse cx="32.0" cy="58.7" rx="8.6" ry="8.7" fill="#a3d3ad" opacity="0.6"/><ellipse cx="48.6" cy="159.3" rx="14.6" ry="15.4" fill="#a3d3ad" opacity="0.6"/><ellipse cx="33.4" cy="58.4" rx="12.0" ry="12.0" fill="#9fd0aa" opacity="0.6"/><ellipse cx="286.1" cy="133.2" rx="7.8" ry="10.4" fill="#c2e5c9" opacity="0.6"/><ellipse cx="228.2" cy="87.6" rx="8.3" ry="13.2" fill="#9fd0aa" opacity="0.6"/><ellipse cx="227.3" cy="194.5" rx="14.3" ry="7.3" fill="#9fd0aa" opacity="0.6"/><ellipse cx="69.6" cy="152.6" rx="6.4" ry="10.8" fill="#a3d3ad" opacity="0.6"/><ellipse cx="330.7" cy="73.4" rx="11.9" ry="6.8" fill="#bde2c4" opacity="0.6"/><ellipse cx="253.0" cy="218.9" rx="11.3" ry="7.5" fill="#bde2c4" opacity="0.6"/><ellipse cx="382.9" cy="230.0" rx="17.8" ry="7.5" fill="#c2e5c9" opacity="0.6"/><ellipse cx="168.9" cy="8.1" rx="6.4" ry="8.1" fill="#9fd0aa" opacity="0.6"/><ellipse cx="92.0" cy="170.0" rx="11.5" ry="13.9" fill="#9fd0aa" opacity="0.6"/><ellipse cx="453.6" cy="102.5" rx="9.5" ry="7.5" fill="#bde2c4" opacity="0.6"/><ellipse cx="160.4" cy="135.6" rx="21.8" ry="11.7" fill="#a3d3ad" opacity="0.6"/><ellipse cx="227.7" cy="183.5" rx="18.8" ry="5.9" fill="#a3d3ad" opacity="0.6"/><ellipse cx="432.1" cy="219.8" rx="18.0" ry="10.3" fill="#bde2c4" opacity="0.6"/><ellipse cx="206.1" cy="178.7" rx="7.4" ry="15.4" fill="#c2e5c9" opacity="0.6"/><ellipse cx="220.0" cy="208.9" rx="7.4" ry="6.7" fill="#bde2c4" opacity="0.6"/><ellipse cx="13.1" cy="166.0" rx="13.4" ry="12.2" fill="#c2e5c9" opacity="0.6"/><ellipse cx="312.2" cy="98.5" rx="14.8" ry="6.4" fill="#a3d3ad" opacity="0.6"/><ellipse cx="379.7" cy="204.1" rx="7.6" ry="13.2" fill="#bde2c4" opacity="0.6"/><ellipse cx="206.1" cy="245.0" rx="19.2" ry="7.3" fill="#9fd0aa" opacity="0.6"/><ellipse cx="101.1" cy="140.8" rx="18.2" ry="8.6" fill="#c2e5c9" opacity="0.6"/><ellipse cx="396.2" cy="17.1" rx="17.8" ry="14.9" fill="#c2e5c9" opacity="0.6"/><ellipse cx="392.9" cy="246.8" rx="8.1" ry="6.7" fill="#a3d3ad" opacity="0.6"/><ellipse cx="414.6" cy="218.2" rx="15.7" ry="13.5" fill="#bde2c4" opacity="0.6"/><ellipse cx="81.9" cy="133.1" rx="17.6" ry="11.1" fill="#9fd0aa" opacity="0.6"/><ellipse cx="324.1" cy="149.1" rx="13.7" ry="13.5" fill="#a3d3ad" opacity="0.6"/><ellipse cx="118.0" cy="77.8" rx="18.4" ry="10.6" fill="#a3d3ad" opacity="0.6"/><ellipse cx="361.0" cy="256.4" rx="13.1" ry="11.7" fill="#bde2c4" opacity="0.6"/><ellipse cx="329.0" cy="127.1" rx="14.5" ry="10.3" fill="#bde2c4" opacity="0.6"/><ellipse cx="332.1" cy="246.3" rx="21.1" ry="7.9" fill="#bde2c4" opacity="0.6"/><ellipse cx="399.0" cy="38.5" rx="7.9" ry="9.9" fill="#a3d3ad" opacity="0.6"/><ellipse cx="318.8" cy="120.4" rx="9.4" ry="8.3" fill="#a3d3ad" opacity="0.6"/><ellipse cx="426.1" cy="43.4" rx="17.5" ry="12.3" fill="#bde2c4" opacity="0.6"/><path d="M0.0 170.0 L29.0 115.0 L60.0 68.0 L83.0 10.0 L93.0 10.0 L69.0 70.0 L37.0 120.0 L7.0 182.0 L0.0 195.0 Z" fill="#87c194" opacity="0.75"/><path d="M25.0 138.0 L55.0 95.0 L73.0 44.0 L87.0 4.0 L93.0 6.0 L79.0 48.0 L61.0 100.0 L32.0 145.0 Z" fill="#8cc598" opacity="0.7"/><ellipse cx="19" cy="168" rx="22" ry="18" fill="#93c99f" opacity="0.7"/><ellipse cx="47" cy="25" rx="14" ry="10" fill="#93c99f" opacity="0.6"/><ellipse cx="155" cy="155" rx="46" ry="32" fill="#e1e4e6" opacity="0.85"/><ellipse cx="154.6" cy="166.6" rx="6.8" ry="6.7" fill="#dfe2e5" opacity="0.85"/><ellipse cx="215.4" cy="182.0" rx="5.0" ry="6.3" fill="#dfe2e5" opacity="0.85"/><ellipse cx="164.0" cy="191.6" rx="10.0" ry="5.0" fill="#dfe2e5" opacity="0.85"/><ellipse cx="126.1" cy="164.1" rx="4.6" ry="4.8" fill="#dfe2e5" opacity="0.85"/><ellipse cx="134.6" cy="176.6" rx="8.2" ry="4.9" fill="#dfe2e5" opacity="0.85"/><ellipse cx="125.9" cy="150.7" rx="9.8" ry="3.6" fill="#dfe2e5" opacity="0.85"/><ellipse cx="177.0" cy="144.2" rx="9.3" ry="3.4" fill="#dfe2e5" opacity="0.85"/><ellipse cx="144.6" cy="206.8" rx="5.1" ry="6.8" fill="#dfe2e5" opacity="0.85"/><ellipse cx="183.9" cy="108.9" rx="8.1" ry="7.7" fill="#dfe2e5" opacity="0.85"/><ellipse cx="119.0" cy="170.3" rx="7.1" ry="5.5" fill="#dfe2e5" opacity="0.85"/><ellipse cx="141.8" cy="170.9" rx="8.8" ry="3.9" fill="#dfe2e5" opacity="0.85"/><ellipse cx="176.9" cy="140.9" rx="4.1" ry="3.4" fill="#dfe2e5" opacity="0.85"/><ellipse cx="151.8" cy="187.1" rx="5.3" ry="4.3" fill="#dfe2e5" opacity="0.85"/><ellipse cx="158.8" cy="155.6" rx="10.0" ry="5.1" fill="#dfe2e5" opacity="0.85"/><ellipse cx="197.1" cy="135.3" rx="4.3" ry="6.5" fill="#dfe2e5" opacity="0.85"/><ellipse cx="240.5" cy="128.0" rx="5.6" ry="3.9" fill="#dfe2e5" opacity="0.85"/><ellipse cx="199.9" cy="138.5" rx="7.2" ry="4.0" fill="#dfe2e5" opacity="0.85"/><ellipse cx="105.7" cy="165.5" rx="5.6" ry="7.0" fill="#dfe2e5" opacity="0.85"/><ellipse cx="164.6" cy="152.8" rx="4.1" ry="5.5" fill="#dfe2e5" opacity="0.85"/><ellipse cx="196.7" cy="148.9" rx="5.5" ry="5.2" fill="#dfe2e5" opacity="0.85"/><ellipse cx="127.4" cy="122.6" rx="7.9" ry="5.7" fill="#dfe2e5" opacity="0.85"/><ellipse cx="226.0" cy="110.3" rx="5.8" ry="4.1" fill="#dfe2e5" opacity="0.85"/><ellipse cx="158.0" cy="169.5" rx="9.3" ry="6.6" fill="#dfe2e5" opacity="0.85"/><ellipse cx="222.4" cy="211.0" rx="9.9" ry="7.2" fill="#dfe2e5" opacity="0.85"/><ellipse cx="203.9" cy="156.1" rx="9.3" ry="5.2" fill="#dfe2e5" opacity="0.85"/><ellipse cx="203.7" cy="165.6" rx="6.3" ry="5.5" fill="#dfe2e5" opacity="0.85"/><ellipse cx="201.5" cy="146.9" rx="8.2" ry="3.2" fill="#dfe2e5" opacity="0.85"/><ellipse cx="165.9" cy="171.2" rx="4.0" ry="4.8" fill="#dfe2e5" opacity="0.85"/><ellipse cx="106.8" cy="216.7" rx="5.9" ry="3.2" fill="#dfe2e5" opacity="0.85"/><ellipse cx="173.1" cy="141.2" rx="5.1" ry="4.7" fill="#dfe2e5" opacity="0.85"/><ellipse cx="179.5" cy="163.2" rx="7.9" ry="4.2" fill="#dfe2e5" opacity="0.85"/><ellipse cx="157.5" cy="142.2" rx="8.9" ry="3.7" fill="#dfe2e5" opacity="0.85"/><ellipse cx="125.1" cy="140.0" rx="5.8" ry="6.1" fill="#dfe2e5" opacity="0.85"/><ellipse cx="230.9" cy="184.8" rx="9.1" ry="3.8" fill="#dfe2e5" opacity="0.85"/><ellipse cx="202.9" cy="125.7" rx="7.6" ry="6.8" fill="#dfe2e5" opacity="0.85"/><ellipse cx="147.5" cy="124.3" rx="5.7" ry="6.1" fill="#dfe2e5" opacity="0.85"/><ellipse cx="195.1" cy="189.8" rx="8.3" ry="5.6" fill="#dfe2e5" opacity="0.85"/><ellipse cx="105.9" cy="169.7" rx="7.0" ry="7.5" fill="#dfe2e5" opacity="0.85"/><ellipse cx="155.8" cy="120.6" rx="8.9" ry="3.1" fill="#dfe2e5" opacity="0.85"/><ellipse cx="130.7" cy="111.8" rx="8.3" ry="7.8" fill="#dfe2e5" opacity="0.85"/><ellipse cx="200.4" cy="56.7" rx="4.3" ry="6.2" fill="#dfe2e5" opacity="0.85"/><ellipse cx="230.5" cy="58.1" rx="6.7" ry="3.3" fill="#dfe2e5" opacity="0.85"/><ellipse cx="237.6" cy="64.3" rx="5.5" ry="4.3" fill="#dfe2e5" opacity="0.85"/><ellipse cx="197.8" cy="63.6" rx="9.6" ry="7.5" fill="#dfe2e5" opacity="0.85"/><ellipse cx="232.6" cy="72.7" rx="8.5" ry="5.4" fill="#dfe2e5" opacity="0.85"/><ellipse cx="224.6" cy="33.2" rx="5.4" ry="6.8" fill="#dfe2e5" opacity="0.85"/><ellipse cx="211.4" cy="85.0" rx="6.8" ry="7.2" fill="#dfe2e5" opacity="0.85"/><ellipse cx="255.7" cy="78.3" rx="5.7" ry="3.2" fill="#dfe2e5" opacity="0.85"/><ellipse cx="195.8" cy="54.1" rx="7.6" ry="4.7" fill="#dfe2e5" opacity="0.85"/><ellipse cx="184.7" cy="42.0" rx="7.7" ry="3.7" fill="#dfe2e5" opacity="0.85"/><ellipse cx="178.3" cy="64.0" rx="9.8" ry="3.5" fill="#dfe2e5" opacity="0.85"/><ellipse cx="212.8" cy="80.2" rx="8.3" ry="4.4" fill="#dfe2e5" opacity="0.85"/><ellipse cx="165.3" cy="67.8" rx="10.0" ry="5.7" fill="#dfe2e5" opacity="0.85"/><ellipse cx="203.0" cy="68.3" rx="6.8" ry="4.4" fill="#dfe2e5" opacity="0.85"/><ellipse cx="233.4" cy="70.8" rx="10.0" ry="8.0" fill="#dfe2e5" opacity="0.85"/><ellipse cx="164.8" cy="85.3" rx="9.6" ry="3.4" fill="#dfe2e5" opacity="0.85"/><ellipse cx="242.0" cy="76.3" rx="5.6" ry="4.8" fill="#dfe2e5" opacity="0.85"/><ellipse cx="178.9" cy="48.3" rx="5.7" ry="3.6" fill="#dfe2e5" opacity="0.85"/><ellipse cx="187.6" cy="76.1" rx="9.3" ry="5.0" fill="#dfe2e5" opacity="0.85"/><ellipse cx="240.1" cy="94.9" rx="8.1" ry="5.0" fill="#dfe2e5" opacity="0.85"/><ellipse cx="203.3" cy="45.6" rx="6.3" ry="3.6" fill="#dfe2e5" opacity="0.85"/><ellipse cx="196.2" cy="74.4" rx="6.0" ry="5.0" fill="#dfe2e5" opacity="0.85"/><ellipse cx="222.3" cy="58.1" rx="4.1" ry="6.7" fill="#dfe2e5" opacity="0.85"/><ellipse cx="206.8" cy="67.9" rx="6.3" ry="7.3" fill="#dfe2e5" opacity="0.85"/><ellipse cx="165.3" cy="125.9" rx="8.5" ry="7.3" fill="#dfe2e5" opacity="0.85"/><ellipse cx="139.2" cy="120.4" rx="8.0" ry="6.2" fill="#dfe2e5" opacity="0.85"/><ellipse cx="159.7" cy="134.1" rx="6.6" ry="4.6" fill="#dfe2e5" opacity="0.85"/><ellipse cx="143.2" cy="105.0" rx="6.6" ry="3.1" fill="#dfe2e5" opacity="0.85"/><ellipse cx="140.9" cy="110.4" rx="9.3" ry="5.8" fill="#dfe2e5" opacity="0.85"/><ellipse cx="141.5" cy="120.9" rx="9.6" ry="5.1" fill="#dfe2e5" opacity="0.85"/><ellipse cx="134.9" cy="115.3" rx="9.2" ry="5.4" fill="#dfe2e5" opacity="0.85"/><ellipse cx="153.4" cy="113.0" rx="5.0" ry="5.1" fill="#dfe2e5" opacity="0.85"/><ellipse cx="100.9" cy="62.8" rx="8.4" ry="6.3" fill="#dfe2e5" opacity="0.85"/><ellipse cx="97.7" cy="61.1" rx="6.9" ry="6.3" fill="#dfe2e5" opacity="0.85"/><ellipse cx="109.3" cy="63.9" rx="4.5" ry="5.5" fill="#dfe2e5" opacity="0.85"/><ellipse cx="105.4" cy="53.1" rx="6.7" ry="4.7" fill="#dfe2e5" opacity="0.85"/><ellipse cx="102.4" cy="53.7" rx="7.3" ry="4.2" fill="#dfe2e5" opacity="0.85"/><ellipse cx="256.1" cy="30.7" rx="5.9" ry="4.8" fill="#dfe2e5" opacity="0.85"/><ellipse cx="253.7" cy="21.9" rx="4.1" ry="7.4" fill="#dfe2e5" opacity="0.85"/><ellipse cx="243.4" cy="30.6" rx="5.3" ry="4.4" fill="#dfe2e5" opacity="0.85"/><ellipse cx="252.1" cy="19.1" rx="7.4" ry="4.8" fill="#dfe2e5" opacity="0.85"/><ellipse cx="344.9" cy="3.2" rx="8.7" ry="7.2" fill="#dfe2e5" opacity="0.85"/><ellipse cx="378.7" cy="17.0" rx="6.3" ry="6.2" fill="#dfe2e5" opacity="0.85"/><ellipse cx="340.2" cy="12.2" rx="8.9" ry="7.8" fill="#dfe2e5" opacity="0.85"/><ellipse cx="363.0" cy="14.5" rx="8.6" ry="7.0" fill="#dfe2e5" opacity="0.85"/><ellipse cx="369.1" cy="8.6" rx="4.4" ry="7.7" fill="#dfe2e5" opacity="0.85"/><ellipse cx="368.5" cy="6.8" rx="6.8" ry="5.2" fill="#dfe2e5" opacity="0.85"/><ellipse cx="354.2" cy="5.8" rx="4.9" ry="7.9" fill="#dfe2e5" opacity="0.85"/><ellipse cx="373.7" cy="17.1" rx="8.2" ry="7.2" fill="#dfe2e5" opacity="0.85"/><ellipse cx="391.0" cy="98.7" rx="8.7" ry="3.0" fill="#dfe2e5" opacity="0.85"/><ellipse cx="394.5" cy="104.6" rx="4.2" ry="6.6" fill="#dfe2e5" opacity="0.85"/><ellipse cx="397.2" cy="98.4" rx="7.2" ry="5.2" fill="#dfe2e5" opacity="0.85"/><ellipse cx="389.2" cy="97.7" rx="5.8" ry="7.7" fill="#dfe2e5" opacity="0.85"/><path d="M-17.4 -16.6 Q-6.2 -9.0 1.0 -9.4 M-10.8 -5.5 Q-9.1 -1.8 -4.9 -5.2 M-10.8 -5.5 Q-13.5 7.0 -13.6 19.5 M-13.6 19.5 Q-13.6 20.4 -16.4 26.0 M-16.4 26.0 Q-15.8 36.2 -10.3 39.2 M-10.3 39.2 Q-8.1 44.0 -0.6 44.3 M-10.3 39.2 Q-13.9 51.6 -13.7 56.5 M-13.7 56.5 Q-6.8 51.2 -2.0 51.7 M-19.2 69.0 Q-14.2 71.1 -12.4 79.1 M-12.4 79.1 Q-6.2 83.1 -3.4 85.7 M-12.4 79.1 Q-13.8 87.6 -17.4 102.2 M-17.4 102.2 Q-11.0 107.5 -12.4 107.4 M-12.4 107.4 Q-14.8 112.6 -17.0 125.2 M-17.0 125.2 Q-8.2 132.0 3.7 131.3 M-17.0 125.2 Q-16.7 133.1 -15.4 139.9 M-15.4 139.9 Q-8.3 141.6 -0.6 135.7 M-15.4 139.9 Q-11.7 146.8 -11.8 156.4 M-15.5 166.9 Q-9.3 166.3 -0.9 172.2 M-15.5 166.9 Q-16.6 175.1 -19.4 179.7 M-19.4 179.7 Q-7.4 178.5 0.7 184.8 M-19.4 179.7 Q-17.7 184.4 -10.2 191.2 M-10.2 191.2 Q-4.4 200.8 -2.1 213.3 M-14.0 206.7 Q-6.9 208.9 -2.1 213.3 M-14.0 206.7 Q-15.5 217.0 -11.1 220.6 M-11.1 220.6 Q-10.9 225.9 -4.5 226.3 M-14.4 235.4 Q-11.1 236.3 -3.3 238.5 M-9.7 247.7 Q-13.4 254.6 -12.6 267.2 M-9.6 279.8 Q-7.8 279.4 1.4 277.2 M-9.5 289.1 Q-7.6 292.7 1.4 293.0 M1.0 -9.4 Q2.9 -8.2 12.6 -14.4 M1.0 -9.4 Q-0.1 -8.3 -4.9 -5.2 M1.0 -9.4 Q11.6 -5.7 17.3 -4.8 M-4.9 -5.2 Q-1.6 4.0 1.1 13.1 M1.1 13.1 Q0.9 19.7 2.3 24.5 M1.1 13.1 Q10.6 21.6 15.2 26.5 M-0.6 44.3 Q1.6 48.3 -2.0 51.7 M-2.0 51.7 Q5.4 56.8 9.0 58.7 M-2.0 51.7 Q-2.7 59.5 -4.6 66.3 M-4.6 66.3 Q5.3 68.6 16.1 74.7 M-4.6 66.3 Q-0.3 73.6 -3.4 85.7 M0.3 97.6 Q-1.2 106.4 -2.1 114.5 M3.7 131.3 Q1.6 133.6 -0.6 135.7 M-4.6 149.4 Q1.0 158.3 -0.9 172.2 M-4.6 149.4 Q4.9 145.5 16.4 139.6 M-0.9 172.2 Q5.2 168.2 18.5 171.5 M0.7 184.8 Q2.4 186.7 10.0 182.0 M0.7 184.8 Q3.6 189.5 -1.3 199.0 M0.7 184.8 Q6.5 191.6 8.6 200.7 M-1.3 199.0 Q2.4 188.4 10.0 182.0 M-2.1 213.3 Q5.1 211.6 11.8 212.1 M-2.1 213.3 Q-0.8 218.6 -4.5 226.3 M-4.5 226.3 Q-0.7 230.3 -3.3 238.5 M-3.3 238.5 Q11.2 237.5 18.0 237.6 M-3.3 238.5 Q1.5 227.0 10.2 221.1 M2.6 265.7 Q6.0 273.6 1.4 277.2 M1.4 277.2 Q9.8 278.0 10.3 279.0 M1.4 277.2 Q-2.3 287.8 1.4 293.0 M1.4 277.2 Q9.5 286.7 15.6 293.8 M12.6 -14.4 Q12.8 -5.9 17.3 -4.8 M17.3 -4.8 Q22.5 -6.1 27.2 -4.3 M17.3 -4.8 Q15.0 -0.1 10.6 9.2 M10.6 9.2 Q16.7 15.8 23.3 15.4 M10.6 9.2 Q11.6 17.7 15.2 26.5 M12.2 47.0 Q21.9 43.6 33.4 47.2 M9.0 58.7 Q14.1 70.0 16.1 74.7 M9.0 58.7 Q18.8 52.4 33.4 47.2 M16.1 74.7 Q16.3 82.9 11.8 86.4 M11.8 86.4 Q15.0 89.1 25.1 84.4 M11.8 86.4 Q12.3 96.7 15.1 101.4 M15.1 101.4 Q18.6 105.7 18.9 107.2 M18.9 107.2 Q28.1 110.9 31.1 109.7 M17.0 157.2 Q18.4 165.6 18.5 171.5 M17.0 157.2 Q18.7 150.7 25.3 137.4 M18.5 171.5 Q13.1 176.5 10.0 182.0 M8.6 200.7 Q19.1 197.4 23.2 193.3 M11.8 212.1 Q14.9 210.8 25.2 210.3 M10.2 221.1 Q17.8 216.8 29.6 219.6 M10.2 221.1 Q10.5 225.9 18.0 237.6 M18.0 237.6 Q15.7 246.5 17.1 253.1 M18.0 237.6 Q18.8 243.1 22.5 256.2 M17.1 253.1 Q15.5 259.8 14.1 264.8 M14.1 264.8 Q21.3 276.7 26.6 284.1 M10.3 279.0 Q22.0 284.6 26.6 284.1 M10.3 279.0 Q11.5 287.6 15.6 293.8 M28.5 -17.7 Q31.9 -16.4 43.1 -10.4 M28.5 -17.7 Q30.6 -12.2 27.2 -4.3 M27.2 -4.3 Q34.4 -1.6 38.6 -4.7 M27.2 -4.3 Q29.1 6.1 23.3 15.4 M23.3 15.4 Q20.3 22.4 24.8 27.1 M33.4 47.2 Q36.6 42.3 43.8 36.6 M33.4 47.2 Q31.4 53.4 24.4 52.0 M24.4 52.0 Q37.8 58.6 43.5 58.3 M27.6 74.3 Q36.2 67.7 40.3 64.9 M31.0 100.9 Q40.9 96.4 47.5 92.9 M31.1 109.7 Q26.0 118.9 25.6 123.4 M31.1 109.7 Q39.5 115.7 45.5 129.5 M25.3 137.4 Q36.4 137.0 41.0 138.6 M25.3 137.4 Q31.5 135.1 45.5 129.5 M27.3 150.5 Q34.2 148.6 43.3 149.4 M27.3 150.5 Q24.4 161.1 25.1 165.6 M25.1 165.6 Q32.3 174.2 32.5 178.6 M32.5 178.6 Q33.9 175.8 41.8 181.0 M23.2 193.3 Q34.8 189.9 41.8 181.0 M25.2 210.3 Q29.6 214.5 29.6 219.6 M27.6 232.9 Q23.5 244.6 22.5 256.2 M22.5 256.2 Q32.4 253.0 43.8 251.1 M25.0 265.4 Q34.2 267.7 37.1 268.7 M25.0 265.4 Q26.8 270.9 26.6 284.1 M26.6 284.1 Q35.0 272.9 37.1 268.7 M25.1 289.1 Q34.5 296.8 36.7 296.9 M43.1 -10.4 Q49.0 -11.1 59.3 -12.4 M38.6 -4.7 Q43.1 6.5 42.1 10.5 M38.6 -4.7 Q53.5 7.1 60.9 13.3 M42.1 10.5 Q48.1 13.5 60.9 13.3 M42.1 10.5 Q40.8 24.5 43.1 31.0 M42.1 10.5 Q50.8 8.3 54.8 -1.0 M43.1 31.0 Q46.3 23.7 52.2 23.7 M43.1 31.0 Q41.7 32.4 43.8 36.6 M43.8 36.6 Q43.0 47.8 43.5 58.3 M40.3 64.9 Q40.3 75.9 40.2 79.0 M40.2 79.0 Q47.1 68.3 51.9 65.1 M47.5 92.9 Q46.5 106.2 44.6 116.6 M44.6 116.6 Q53.2 115.4 60.7 114.6 M45.5 129.5 Q48.0 129.5 52.4 124.3 M41.0 138.6 Q50.4 135.6 52.3 136.4 M41.0 138.6 Q49.1 132.8 52.4 124.3 M36.8 168.0 Q40.0 175.0 41.8 181.0 M36.8 168.0 Q46.1 159.2 51.2 152.7 M41.8 181.0 Q47.9 179.3 59.4 179.8 M45.3 197.8 Q56.1 197.2 59.7 191.0 M38.2 210.4 Q52.3 208.6 60.5 208.0 M38.2 210.4 Q42.6 215.6 43.7 222.9 M43.7 222.9 Q48.9 225.5 57.2 225.5 M43.7 222.9 Q39.9 232.7 39.5 243.4 M43.7 222.9 Q48.6 233.5 51.4 240.3 M39.5 243.4 Q41.5 238.9 51.4 240.3 M39.5 243.4 Q42.9 248.2 43.8 251.1 M43.8 251.1 Q51.4 249.7 58.1 256.3 M43.8 251.1 Q41.2 258.3 37.1 268.7 M37.1 268.7 Q45.4 268.8 57.5 269.9 M37.1 268.7 Q41.6 270.6 46.2 279.1 M46.2 279.1 Q54.0 283.5 57.3 281.3 M46.2 279.1 Q53.9 278.2 57.5 269.9 M36.7 296.9 Q45.5 293.4 52.7 293.7 M59.3 -12.4 Q58.0 -2.9 54.8 -1.0 M54.8 -1.0 Q55.5 9.0 60.9 13.3 M54.8 -1.0 Q61.2 3.7 68.5 10.1 M60.9 13.3 Q68.4 8.2 74.8 -3.8 M52.2 23.7 Q55.8 30.7 51.5 42.9 M52.2 23.7 Q58.6 32.1 66.6 46.2 M51.5 42.9 Q56.9 42.1 66.6 46.2 M51.5 42.9 Q56.4 49.3 54.5 59.0 M54.5 59.0 Q60.9 61.2 73.8 57.9 M54.5 59.0 Q63.2 66.3 71.8 68.1 M51.9 65.1 Q64.5 64.2 71.8 68.1 M51.9 65.1 Q54.9 76.6 52.1 87.4 M52.1 87.4 Q59.7 81.8 68.8 83.5 M54.9 98.8 Q58.1 106.9 60.7 114.6 M54.9 98.8 Q62.3 105.7 71.6 109.9 M60.7 114.6 Q69.3 113.7 71.6 109.9 M60.7 114.6 Q54.5 118.5 52.4 124.3 M52.4 124.3 Q56.9 122.2 67.2 124.8 M52.3 136.4 Q55.2 143.3 51.2 152.7 M51.2 152.7 Q59.8 163.8 75.3 167.6 M58.8 171.2 Q64.8 168.9 75.3 167.6 M58.8 171.2 Q56.7 179.3 59.4 179.8 M59.4 179.8 Q57.2 182.8 59.7 191.0 M59.7 191.0 Q69.6 197.9 73.5 199.7 M59.7 191.0 Q56.2 201.2 60.5 208.0 M60.5 208.0 Q68.7 210.4 73.4 208.9 M51.4 240.3 Q56.7 237.2 68.5 241.3 M51.4 240.3 Q57.4 250.0 58.1 256.3 M57.5 269.9 Q63.3 268.9 64.9 261.9 M57.3 281.3 Q64.1 280.0 74.6 278.0 M57.3 281.3 Q58.6 288.8 52.7 293.7 M52.7 293.7 Q59.8 289.9 72.4 289.4 M70.7 -19.0 Q70.0 -13.9 74.8 -3.8 M74.8 -3.8 Q76.6 -1.5 85.7 3.1 M68.5 10.1 Q70.2 9.6 78.8 9.2 M68.5 10.1 Q74.1 23.9 75.2 31.5 M75.2 31.5 Q78.6 31.5 85.3 30.1 M73.8 57.9 Q81.6 52.6 88.2 53.7 M73.8 57.9 Q70.4 60.2 71.8 68.1 M71.8 68.1 Q79.5 69.3 87.4 73.2 M71.8 68.1 Q67.2 78.4 68.8 83.5 M68.8 83.5 Q79.4 81.9 86.0 86.4 M68.8 83.5 Q70.5 88.6 73.8 101.1 M68.8 83.5 Q75.5 91.9 80.9 101.7 M73.8 101.1 Q80.1 98.0 80.9 101.7 M71.6 109.9 Q65.5 118.5 67.2 124.8 M67.2 124.8 Q71.5 123.9 82.1 127.2 M67.2 124.8 Q66.1 132.7 68.5 140.0 M68.5 140.0 Q65.6 147.9 66.5 148.5 M75.3 167.6 Q76.3 165.2 83.8 169.0 M75.3 167.6 Q74.7 177.1 69.4 183.3 M69.4 183.3 Q74.7 183.9 85.3 179.1 M73.5 199.7 Q78.6 193.2 82.6 192.7 M73.4 208.9 Q71.9 218.2 65.2 222.4 M73.4 208.9 Q76.2 212.3 81.6 222.1 M65.2 222.4 Q65.3 228.6 68.5 241.3 M68.5 241.3 Q74.1 244.7 82.6 241.2 M68.5 241.3 Q77.3 245.3 81.4 255.0 M70.0 253.7 Q78.1 256.5 81.4 255.0 M70.0 253.7 Q70.9 259.3 64.9 261.9 M70.0 253.7 Q72.4 250.5 82.6 241.2 M64.9 261.9 Q72.2 264.6 79.0 269.9 M64.9 261.9 Q70.6 266.4 74.6 278.0 M64.9 261.9 Q72.1 257.7 81.4 255.0 M72.4 289.4 Q80.5 292.7 84.2 296.1 M86.8 -9.7 Q82.6 -3.5 85.7 3.1 M85.7 3.1 Q81.3 7.3 78.8 9.2 M85.3 30.1 Q93.2 30.8 96.6 26.6 M88.2 53.7 Q95.1 63.5 99.3 75.0 M87.4 73.2 Q85.8 83.4 86.0 86.4 M80.9 101.7 Q86.8 103.2 95.9 103.1 M85.2 109.3 Q92.0 110.2 102.1 116.7 M85.2 109.3 Q80.3 117.4 82.1 127.2 M85.2 109.3 Q89.2 110.1 95.9 103.1 M82.1 127.2 Q95.3 127.2 102.4 128.6 M82.1 127.2 Q83.2 131.1 88.5 139.5 M88.5 139.5 Q83.5 146.5 81.3 159.1 M83.8 169.0 Q93.4 170.1 97.1 166.5 M85.3 179.1 Q85.2 183.3 93.0 181.9 M85.3 179.1 Q81.9 186.4 82.6 192.7 M82.9 211.5 Q84.3 214.8 81.6 222.1 M81.6 222.1 Q86.8 221.5 95.8 224.3 M81.6 222.1 Q83.8 233.2 82.6 241.2 M82.6 241.2 Q91.7 239.1 98.4 237.0 M82.6 241.2 Q92.2 247.7 95.8 248.0 M82.6 241.2 Q88.3 231.2 95.8 224.3 M81.4 255.0 Q85.8 252.3 95.8 248.0 M81.4 255.0 Q83.8 262.3 79.0 269.9 M81.4 255.0 Q92.5 260.5 96.5 269.6 M79.0 269.9 Q88.1 272.1 89.1 279.5 M89.1 279.5 Q88.9 284.0 84.2 296.1 M84.2 296.1 Q96.4 297.3 101.3 296.3 M102.4 -16.7 Q103.6 -7.8 98.4 3.9 M98.4 3.9 Q99.6 3.1 108.1 1.8 M100.6 12.6 Q103.5 15.2 109.5 17.4 M94.1 40.1 Q107.9 43.0 115.5 46.3 M93.4 53.0 Q94.9 66.4 99.3 75.0 M93.4 53.0 Q107.9 50.7 115.5 46.3 M99.3 75.0 Q105.5 69.9 113.1 70.2 M99.3 75.0 Q103.8 78.0 111.9 80.3 M95.8 84.2 Q92.4 92.8 95.9 103.1 M102.1 116.7 Q104.7 114.2 106.8 108.5 M102.1 116.7 Q103.0 121.5 102.4 128.6 M102.4 128.6 Q102.4 135.4 100.7 136.9 M100.7 136.9 Q95.6 147.9 95.7 155.4 M100.7 136.9 Q103.7 136.5 108.3 130.5 M97.1 166.5 Q107.0 169.1 111.0 168.2 M97.1 166.5 Q96.9 173.5 93.0 181.9 M93.0 181.9 Q104.8 186.1 113.6 183.6 M93.0 181.9 Q92.2 187.0 99.2 191.0 M99.2 191.0 Q107.0 196.4 111.1 197.2 M93.1 210.7 Q105.4 205.9 112.1 205.2 M93.1 210.7 Q92.7 213.8 95.8 224.3 M95.8 224.3 Q102.9 228.0 113.4 229.4 M96.5 269.6 Q98.1 275.8 107.4 281.7 M94.2 274.7 Q97.4 287.6 101.3 296.3 M111.5 -18.8 Q110.1 -8.7 108.1 1.8 M108.1 1.8 Q118.5 6.8 121.9 4.3 M108.1 1.8 Q106.6 10.1 109.5 17.4 M117.1 23.1 Q122.8 21.2 123.4 23.1 M117.1 23.1 Q120.0 32.9 115.5 46.3 M117.1 23.1 Q119.2 32.7 127.5 44.0 M115.5 46.3 Q122.8 48.2 127.5 44.0 M115.5 46.3 Q113.3 51.8 113.0 56.9 M111.9 80.3 Q118.6 86.4 130.7 88.3 M111.9 80.3 Q112.4 82.9 106.5 93.2 M106.8 108.5 Q109.8 115.7 108.3 130.5 M108.3 130.5 Q117.8 126.0 129.8 122.7 M107.7 141.2 Q115.4 143.9 122.3 144.6 M113.7 150.7 Q120.1 153.3 122.6 152.8 M113.7 150.7 Q108.6 161.1 111.0 168.2 M111.0 168.2 Q115.4 175.8 113.6 183.6 M111.0 168.2 Q119.2 176.0 129.9 186.6 M111.1 197.2 Q120.0 199.8 131.3 199.8 M112.1 205.2 Q114.9 219.1 113.4 229.4 M113.4 229.4 Q117.0 220.9 126.3 218.6 M113.4 229.4 Q122.4 223.3 126.4 209.7 M114.5 237.8 Q119.9 238.0 120.8 243.0 M112.4 250.6 Q118.2 253.1 123.1 256.2 M112.4 250.6 Q114.2 245.7 120.8 243.0 M111.3 270.5 Q112.4 279.7 107.4 281.7 M123.4 -12.4 Q123.8 -1.2 121.9 4.3 M121.9 4.3 Q129.3 12.4 130.7 18.9 M121.9 4.3 Q132.0 5.6 142.2 8.8 M130.7 18.9 Q133.9 26.2 136.0 29.6 M127.5 44.0 Q127.2 40.3 135.0 37.2 M127.5 44.0 Q131.3 56.0 128.0 60.6 M127.5 44.0 Q132.2 37.4 136.0 29.6 M128.0 60.6 Q127.9 60.0 135.0 59.9 M128.0 60.6 Q133.3 66.2 131.2 67.8 M128.0 60.6 Q128.7 49.2 135.0 37.2 M131.2 67.8 Q131.0 81.7 130.7 88.3 M130.7 88.3 Q134.1 87.5 145.0 84.4 M130.7 88.3 Q126.6 94.1 121.4 98.1 M129.8 122.7 Q136.9 120.6 138.7 123.2 M122.3 144.6 Q133.8 153.0 144.9 158.5 M122.3 144.6 Q128.4 136.9 138.7 123.2 M122.6 152.8 Q123.1 158.2 127.1 166.7 M127.1 166.7 Q126.0 173.3 129.9 186.6 M127.1 166.7 Q136.4 177.2 142.8 183.5 M129.9 186.6 Q140.2 188.4 142.8 183.5 M131.3 199.8 Q125.0 201.2 126.4 209.7 M126.4 209.7 Q138.1 213.1 143.2 211.6 M126.4 209.7 Q127.3 212.5 126.3 218.6 M126.3 218.6 Q130.9 224.8 137.4 236.4 M129.2 264.8 Q136.3 266.4 142.9 270.5 M129.2 264.8 Q126.9 275.3 126.9 280.7 M129.2 264.8 Q138.2 270.9 143.0 281.1 M126.9 280.7 Q132.2 277.2 143.0 281.1 M122.4 288.9 Q128.0 289.9 139.7 291.7 M135.7 -12.7 Q147.5 -13.8 156.7 -10.8 M136.3 5.3 Q144.8 3.8 148.8 0.2 M142.2 8.8 Q149.1 5.4 148.8 0.2 M136.0 29.6 Q139.1 31.7 135.0 37.2 M135.0 37.2 Q137.9 49.7 135.0 59.9 M135.0 59.9 Q135.5 59.9 142.9 66.7 M135.0 59.9 Q147.5 53.0 156.4 45.6 M142.9 66.7 Q144.7 68.9 153.3 70.3 M141.8 102.2 Q144.6 100.8 149.1 96.3 M141.8 102.2 Q146.2 111.3 142.8 114.3 M142.8 114.3 Q143.8 113.3 149.6 114.1 M142.8 114.3 Q147.9 121.5 157.6 131.1 M138.7 123.2 Q143.6 136.4 155.0 145.0 M136.7 134.9 Q144.0 136.3 155.0 145.0 M136.7 134.9 Q143.5 143.2 144.9 158.5 M136.7 134.9 Q147.8 129.5 157.6 131.1 M144.9 158.5 Q147.7 160.1 154.2 154.9 M142.8 163.5 Q145.5 169.4 150.2 171.5 M142.8 163.5 Q140.1 174.8 142.8 183.5 M142.8 183.5 Q152.9 184.7 158.8 179.0 M142.8 183.5 Q142.4 190.8 139.7 192.0 M139.7 192.0 Q148.2 194.5 150.3 200.8 M139.7 192.0 Q138.3 200.8 143.2 211.6 M143.2 211.6 Q150.0 207.6 156.9 209.9 M137.7 222.2 Q152.0 226.7 159.4 224.7 M137.7 222.2 Q134.0 226.8 137.4 236.4 M137.4 236.4 Q142.2 232.7 149.7 236.1 M137.4 236.4 Q140.9 239.4 144.7 247.0 M144.7 247.0 Q140.3 258.2 142.9 270.5 M144.7 247.0 Q151.7 257.9 158.3 268.7 M142.9 270.5 Q150.4 269.4 158.3 268.7 M143.0 281.1 Q146.0 288.8 152.6 291.8 M143.0 281.1 Q152.3 274.7 158.3 268.7 M139.7 291.7 Q146.2 292.8 152.6 291.8 M148.8 0.2 Q157.8 4.9 164.4 5.3 M149.6 13.7 Q162.6 14.8 169.4 18.9 M149.6 13.7 Q152.2 22.4 149.0 28.7 M149.0 28.7 Q156.1 30.7 163.9 29.0 M149.0 28.7 Q155.5 35.4 156.4 45.6 M156.4 45.6 Q161.7 42.0 170.1 43.2 M156.4 45.6 Q151.8 47.0 154.8 53.7 M154.8 53.7 Q157.8 58.1 162.9 56.9 M153.3 70.3 Q152.2 77.0 151.7 86.8 M151.7 86.8 Q156.3 91.5 166.1 97.6 M149.6 114.1 Q162.3 112.6 170.1 109.3 M149.6 114.1 Q153.9 121.7 157.6 131.1 M157.6 131.1 Q160.6 130.9 165.0 124.2 M155.0 145.0 Q154.0 146.6 154.2 154.9 M154.2 154.9 Q161.7 150.9 168.1 151.4 M154.2 154.9 Q154.2 166.9 150.2 171.5 M154.2 154.9 Q161.4 151.1 169.6 142.2 M150.2 171.5 Q161.8 175.4 169.3 184.5 M158.8 179.0 Q163.1 180.2 169.3 184.5 M150.3 200.8 Q161.8 199.9 173.2 198.5 M156.9 209.9 Q158.9 215.3 159.4 224.7 M149.7 236.1 Q160.1 241.2 165.3 243.0 M149.7 236.1 Q151.1 244.1 149.5 256.7 M149.5 256.7 Q160.2 254.6 173.4 248.3 M158.3 268.7 Q167.8 269.5 169.7 262.6 M158.3 268.7 Q159.5 275.5 153.1 281.6 M153.1 281.6 Q154.5 285.8 152.6 291.8 M167.2 -13.5 Q165.9 -1.0 164.4 5.3 M164.4 5.3 Q166.5 10.8 169.4 18.9 M169.4 18.9 Q169.2 25.5 163.9 29.0 M163.9 29.0 Q167.2 31.5 176.6 31.9 M163.9 29.0 Q167.4 33.7 170.1 43.2 M170.1 43.2 Q169.3 51.2 162.9 56.9 M170.1 43.2 Q173.0 38.9 176.6 31.9 M162.9 56.9 Q168.7 66.2 168.2 74.0 M168.2 74.0 Q174.9 73.4 176.7 67.3 M168.2 74.0 Q165.8 76.7 167.5 84.6 M167.5 84.6 Q162.9 87.8 166.1 97.6 M167.5 84.6 Q170.9 93.0 179.2 101.9 M167.5 84.6 Q170.9 74.3 176.7 67.3 M170.1 109.3 Q175.3 107.7 184.2 113.0 M170.1 109.3 Q171.3 113.8 165.0 124.2 M165.0 124.2 Q171.5 127.8 183.6 129.8 M169.6 142.2 Q167.2 142.9 168.1 151.4 M169.6 142.2 Q176.4 132.5 183.6 129.8 M168.1 151.4 Q179.5 153.1 186.2 155.6 M168.1 151.4 Q172.0 162.5 170.8 171.6 M170.8 171.6 Q173.0 171.8 182.9 165.0 M170.8 171.6 Q172.8 177.7 169.3 184.5 M169.3 184.5 Q172.5 177.6 178.5 177.9 M169.3 184.5 Q167.4 191.6 173.2 198.5 M173.2 198.5 Q174.8 193.4 181.3 193.4 M169.1 208.3 Q173.2 211.0 184.2 214.3 M169.1 208.3 Q168.7 220.1 165.1 229.0 M165.1 229.0 Q172.3 224.4 179.2 222.9 M165.3 243.0 Q172.7 236.0 184.3 234.2 M165.3 243.0 Q170.8 235.2 179.2 222.9 M169.7 262.6 Q169.8 267.6 176.7 269.9 M169.7 262.6 Q180.2 257.3 185.8 251.8 M164.2 276.1 Q176.0 282.5 182.2 281.8 M164.2 276.1 Q166.6 284.2 165.8 291.8 M165.8 291.8 Q172.4 297.2 186.1 298.3 M165.8 291.8 Q177.4 283.8 182.2 281.8 M186.5 -2.4 Q194.6 -2.7 199.7 4.5 M186.2 13.6 Q189.1 9.6 191.7 11.3 M176.6 31.9 Q188.0 32.5 192.9 30.4 M176.6 31.9 Q180.6 34.0 181.3 38.9 M181.3 38.9 Q189.1 37.9 201.0 38.7 M187.3 53.8 Q182.4 57.3 176.7 67.3 M176.7 67.3 Q178.5 70.4 184.6 78.6 M184.6 78.6 Q187.8 80.9 195.7 78.7 M179.2 101.9 Q184.1 103.6 184.2 113.0 M183.8 141.7 Q184.2 138.8 192.5 140.2 M183.8 141.7 Q187.3 146.7 186.2 155.6 M183.8 141.7 Q188.6 153.1 200.8 156.5 M186.2 155.6 Q196.5 159.6 200.8 156.5 M186.2 155.6 Q185.5 159.4 182.9 165.0 M182.9 165.0 Q191.5 169.3 197.3 169.5 M178.5 177.9 Q188.0 182.0 191.2 191.3 M181.3 193.4 Q186.3 190.9 191.2 191.3 M181.3 193.4 Q181.2 201.8 184.2 214.3 M184.2 214.3 Q195.6 210.3 200.6 211.4 M184.2 214.3 Q183.9 221.5 179.2 222.9 M179.2 222.9 Q191.8 226.2 197.9 224.9 M184.3 234.2 Q187.7 237.0 191.7 235.8 M185.8 251.8 Q187.3 257.5 194.9 257.0 M185.8 251.8 Q192.5 262.5 201.2 271.4 M176.7 269.9 Q191.8 271.8 201.2 271.4 M176.7 269.9 Q179.3 274.9 182.2 281.8 M182.2 281.8 Q182.9 292.8 186.1 298.3 M194.1 -19.4 Q199.9 -12.8 206.6 1.6 M199.7 4.5 Q193.3 8.2 191.7 11.3 M192.9 30.4 Q194.0 38.5 201.0 38.7 M201.0 38.7 Q209.3 38.8 213.6 45.2 M201.0 38.7 Q202.5 37.8 206.1 29.8 M194.3 59.8 Q196.0 59.9 195.5 66.8 M195.5 66.8 Q199.4 72.6 195.7 78.7 M195.5 66.8 Q205.3 64.9 209.0 61.5 M195.7 78.7 Q207.1 84.4 213.1 83.7 M195.7 78.7 Q193.6 88.8 199.2 96.6 M195.7 78.7 Q204.8 71.6 212.9 71.6 M199.2 96.6 Q206.2 99.0 213.1 95.0 M194.3 114.7 Q203.0 111.6 212.2 114.1 M194.3 114.7 Q192.1 122.5 195.5 131.4 M194.3 114.7 Q201.9 122.8 215.3 128.0 M195.5 131.4 Q203.2 130.7 215.3 128.0 M195.5 131.4 Q196.2 138.2 192.5 140.2 M192.5 140.2 Q194.5 150.9 200.8 156.5 M200.8 156.5 Q205.0 150.7 209.8 143.4 M197.3 169.5 Q207.2 167.2 211.7 166.0 M197.3 169.5 Q195.2 171.1 193.3 180.7 M191.2 191.3 Q196.0 196.2 205.4 200.4 M191.2 191.3 Q197.6 205.3 200.6 211.4 M200.6 211.4 Q202.9 208.1 206.2 207.8 M197.9 224.9 Q193.2 229.7 191.7 235.8 M191.7 235.8 Q191.5 246.6 194.9 257.0 M194.9 257.0 Q202.8 253.5 214.9 252.3 M194.9 257.0 Q194.6 261.0 201.2 271.4 M201.1 279.6 Q193.0 291.4 192.3 298.7 M206.6 1.6 Q216.5 10.4 223.5 17.1 M212.4 17.5 Q216.6 17.9 223.5 17.1 M212.4 17.5 Q211.7 20.9 206.1 29.8 M206.1 29.8 Q210.5 31.6 220.8 26.9 M213.6 45.2 Q217.2 44.4 224.4 43.2 M213.6 45.2 Q211.7 55.7 209.0 61.5 M209.0 61.5 Q215.6 62.2 226.1 61.2 M209.0 61.5 Q219.1 48.9 224.4 43.2 M212.9 71.6 Q221.8 76.9 224.5 85.5 M213.1 83.7 Q209.7 87.0 213.1 95.0 M213.1 95.0 Q215.2 96.0 221.8 97.9 M213.1 95.0 Q216.5 107.8 212.2 114.1 M213.1 95.0 Q214.1 101.6 220.8 107.4 M212.2 114.1 Q216.5 117.3 215.3 128.0 M215.3 128.0 Q222.6 129.6 227.7 127.9 M215.3 128.0 Q209.6 134.1 209.8 143.4 M215.3 128.0 Q214.8 128.2 219.8 135.8 M209.8 143.4 Q211.2 144.8 213.3 152.4 M213.3 152.4 Q209.5 162.1 211.7 166.0 M211.7 166.0 Q217.6 163.5 223.7 168.6 M205.4 200.4 Q216.8 200.0 226.2 193.2 M206.2 207.8 Q212.8 205.6 220.3 211.1 M208.7 219.4 Q214.0 222.1 226.6 220.3 M208.7 219.4 Q209.7 229.3 210.7 236.1 M210.7 236.1 Q219.8 239.7 222.0 240.2 M214.9 252.3 Q210.6 260.9 208.3 266.9 M211.7 276.8 Q224.6 277.1 229.5 281.9 M211.7 276.8 Q218.3 269.6 223.6 265.2 M225.2 -13.1 Q227.1 -7.9 227.9 -3.5 M223.5 17.1 Q232.9 13.9 243.5 17.4 M223.5 17.1 Q220.5 22.1 220.8 26.9 M223.5 17.1 Q228.9 6.9 233.0 2.6 M220.8 26.9 Q230.2 28.2 233.5 27.8 M220.8 26.9 Q225.6 37.5 224.4 43.2 M220.8 26.9 Q230.4 31.5 240.8 38.1 M220.8 26.9 Q234.8 20.6 243.5 17.4 M224.4 43.2 Q230.7 42.9 240.8 38.1 M224.4 43.2 Q225.3 52.2 226.1 61.2 M219.5 74.4 Q228.2 71.6 233.9 65.5 M219.5 74.4 Q232.3 80.8 239.7 82.3 M221.8 97.9 Q234.2 101.1 241.1 98.6 M221.8 97.9 Q221.4 102.2 220.8 107.4 M221.8 97.9 Q228.8 106.1 242.5 109.6 M220.8 107.4 Q232.5 111.5 242.5 109.6 M220.8 107.4 Q222.6 120.3 227.7 127.9 M219.8 135.8 Q223.7 140.0 233.1 137.7 M219.8 135.8 Q224.3 144.5 223.1 157.6 M219.8 135.8 Q225.3 133.5 236.3 123.3 M223.1 157.6 Q233.7 152.3 236.4 153.9 M223.1 157.6 Q224.4 166.9 223.7 168.6 M223.7 168.6 Q228.4 167.5 236.2 173.3 M223.7 168.6 Q225.0 177.4 223.8 186.5 M223.8 186.5 Q233.1 180.3 242.1 180.3 M223.8 186.5 Q228.1 193.2 226.2 193.2 M226.2 193.2 Q230.0 203.7 233.8 206.6 M220.3 211.1 Q223.8 207.9 233.8 206.6 M220.3 211.1 Q227.2 215.7 226.6 220.3 M226.6 220.3 Q226.5 228.8 222.0 240.2 M222.0 240.2 Q231.6 239.0 243.2 233.5 M224.0 249.8 Q227.5 258.8 223.6 265.2 M223.6 265.2 Q229.5 266.8 238.6 265.0 M229.5 281.9 Q230.7 280.5 238.8 278.9 M220.5 292.5 Q225.4 287.5 233.7 289.0 M233.0 2.6 Q236.5 13.2 243.5 17.4 M243.5 17.4 Q249.4 16.2 252.0 14.5 M243.5 17.4 Q239.1 26.5 233.5 27.8 M233.5 27.8 Q239.1 26.7 250.6 24.1 M240.8 38.1 Q251.3 37.3 253.9 44.1 M233.9 65.5 Q233.0 70.3 239.7 82.3 M239.7 82.3 Q245.5 80.3 253.4 80.4 M239.7 82.3 Q243.8 89.4 241.1 98.6 M241.1 98.6 Q244.3 102.7 253.8 102.1 M241.1 98.6 Q240.3 104.6 242.5 109.6 M241.1 98.6 Q246.1 102.8 251.1 107.6 M242.5 109.6 Q236.5 119.9 236.3 123.3 M242.5 109.6 Q252.8 114.0 256.7 120.6 M233.1 137.7 Q248.4 140.8 256.1 136.0 M233.1 137.7 Q238.6 143.7 236.4 153.9 M233.1 137.7 Q244.9 144.6 249.9 156.3 M236.4 153.9 Q248.3 141.6 256.1 136.0 M236.2 173.3 Q240.6 174.2 242.1 180.3 M242.1 180.3 Q244.6 181.9 246.9 176.7 M233.8 206.6 Q241.5 204.7 256.6 210.0 M233.8 206.6 Q239.1 210.8 240.3 219.9 M240.3 219.9 Q244.4 223.4 252.2 227.6 M240.3 219.9 Q241.5 228.3 243.2 233.5 M240.3 219.9 Q247.7 215.2 256.6 210.0 M243.2 233.5 Q248.0 233.3 255.0 237.1 M243.2 233.5 Q247.1 233.3 252.2 227.6 M243.5 250.9 Q245.5 247.4 254.2 251.0 M243.5 250.9 Q239.1 259.0 238.6 265.0 M238.6 265.0 Q239.7 269.9 247.2 268.0 M238.6 265.0 Q247.1 261.1 254.2 251.0 M238.8 278.9 Q242.5 281.7 253.0 285.4 M238.8 278.9 Q243.8 288.4 253.8 290.2 M255.5 -14.3 Q264.7 -15.9 269.0 -13.5 M255.5 -14.3 Q258.8 -11.4 254.9 -4.8 M254.9 -4.8 Q256.1 2.1 252.0 14.5 M252.0 14.5 Q261.5 14.4 270.4 15.4 M252.0 14.5 Q254.6 20.6 250.6 24.1 M252.0 14.5 Q259.2 3.8 261.4 -0.3 M250.6 24.1 Q255.1 26.4 265.2 22.6 M250.6 24.1 Q250.7 34.8 253.9 44.1 M246.9 71.5 Q256.2 67.6 261.8 69.7 M246.9 71.5 Q250.6 79.9 253.4 80.4 M253.4 80.4 Q254.6 82.0 263.5 84.8 M253.4 80.4 Q257.8 87.5 265.5 100.7 M253.8 102.1 Q258.6 101.2 265.5 100.7 M251.1 107.6 Q259.2 111.7 270.7 110.5 M251.1 107.6 Q252.0 112.7 256.7 120.6 M256.7 120.6 Q262.6 116.8 270.7 110.5 M249.9 156.3 Q255.7 151.6 263.7 154.6 M249.9 156.3 Q251.7 159.7 256.0 164.5 M246.9 176.7 Q258.4 183.4 270.3 186.5 M246.9 176.7 Q254.0 176.5 266.0 169.9 M252.7 196.9 Q254.0 192.6 261.1 190.9 M252.7 196.9 Q258.3 201.7 256.6 210.0 M256.6 210.0 Q260.2 198.4 261.1 190.9 M252.2 227.6 Q257.5 222.9 268.1 225.3 M252.2 227.6 Q250.8 234.6 255.0 237.1 M252.2 227.6 Q254.9 221.0 261.2 214.2 M254.2 251.0 Q262.9 255.9 267.1 257.0 M254.2 251.0 Q249.3 256.5 247.2 268.0 M254.2 251.0 Q263.7 256.7 269.7 267.2 M247.2 268.0 Q246.9 278.4 253.0 285.4 M253.0 285.4 Q260.7 288.2 264.0 284.9 M253.0 285.4 Q254.0 287.9 253.8 290.2 M253.0 285.4 Q261.0 274.2 269.7 267.2 M253.8 290.2 Q265.1 295.3 268.5 293.7 M253.8 290.2 Q256.7 286.2 264.0 284.9 M269.0 -13.5 Q273.9 -11.8 276.3 -8.9 M269.0 -13.5 Q263.1 -5.8 261.4 -0.3 M261.4 -0.3 Q265.6 9.3 270.4 15.4 M261.4 -0.3 Q270.2 -4.9 276.3 -8.9 M270.4 15.4 Q268.6 18.8 265.2 22.6 M269.9 52.9 Q269.1 58.8 261.8 69.7 M269.9 52.9 Q273.0 61.8 277.6 71.3 M261.8 69.7 Q268.7 72.2 277.6 71.3 M261.8 69.7 Q262.9 74.1 263.5 84.8 M263.5 84.8 Q271.7 88.8 281.7 87.3 M270.7 110.5 Q280.4 109.7 282.5 106.7 M270.7 110.5 Q271.1 116.2 268.7 128.1 M270.7 110.5 Q279.1 104.1 281.1 102.1 M268.7 128.1 Q276.4 126.5 276.2 129.7 M268.7 128.1 Q264.3 133.6 262.1 142.9 M262.1 142.9 Q274.8 146.6 280.9 145.2 M262.1 142.9 Q261.9 151.8 263.7 154.6 M263.7 154.6 Q270.8 156.1 277.2 152.8 M263.7 154.6 Q261.4 159.6 266.0 169.9 M266.0 169.9 Q273.9 172.6 278.6 171.0 M270.3 186.5 Q275.4 185.9 277.1 181.5 M270.3 186.5 Q263.9 187.1 261.1 190.9 M261.2 214.2 Q261.6 222.6 268.1 225.3 M268.1 225.3 Q272.8 229.6 284.6 226.9 M268.1 225.3 Q267.4 231.4 264.8 235.9 M264.8 235.9 Q276.4 232.4 283.1 235.7 M264.8 235.9 Q275.7 229.3 284.6 226.9 M267.1 257.0 Q274.2 256.3 276.0 256.3 M267.1 257.0 Q265.9 260.6 269.7 267.2 M269.7 267.2 Q276.5 267.9 285.4 262.1 M269.7 267.2 Q268.6 272.5 264.0 284.9 M264.0 284.9 Q276.5 280.8 285.2 283.3 M264.0 284.9 Q269.9 290.1 268.5 293.7 M268.5 293.7 Q271.0 293.6 280.5 297.0 M276.3 17.3 Q287.0 19.9 292.7 17.2 M279.7 31.1 Q276.7 33.7 279.5 39.5 M279.7 31.1 Q282.6 33.6 291.9 37.1 M279.5 39.5 Q284.5 38.2 291.9 37.1 M282.8 54.2 Q277.5 62.7 277.6 71.3 M277.6 71.3 Q290.2 70.5 298.7 71.0 M277.6 71.3 Q283.4 77.0 281.7 87.3 M281.7 87.3 Q285.7 88.2 288.6 82.7 M281.7 87.3 Q280.2 91.7 281.1 102.1 M281.1 102.1 Q284.3 107.3 282.5 106.7 M282.5 106.7 Q287.9 107.4 292.4 107.2 M276.2 129.7 Q282.3 136.9 280.9 145.2 M280.9 145.2 Q281.9 146.2 277.2 152.8 M277.2 152.8 Q285.8 152.9 292.0 154.1 M277.2 152.8 Q274.7 163.6 278.6 171.0 M278.6 171.0 Q279.0 176.1 277.1 181.5 M278.6 171.0 Q287.9 181.1 289.5 185.4 M277.1 181.5 Q283.9 192.0 291.7 196.9 M277.4 206.2 Q281.8 212.1 292.4 213.1 M284.6 226.9 Q293.8 226.5 297.9 221.2 M284.6 226.9 Q284.5 234.5 283.1 235.7 M283.1 235.7 Q293.5 234.9 298.6 237.9 M283.1 235.7 Q275.6 249.3 276.0 256.3 M276.0 256.3 Q282.8 262.1 285.4 262.1 M276.0 256.3 Q286.8 258.5 293.6 261.4 M285.4 262.1 Q287.3 260.6 293.6 261.4 M285.4 262.1 Q284.4 273.9 285.2 283.3 M285.2 283.3 Q289.6 281.5 292.0 274.8 M280.5 297.0 Q288.1 294.3 291.6 295.2 M294.4 -0.2 Q301.0 3.9 312.1 0.7 M292.7 17.2 Q302.3 17.2 309.0 10.8 M292.7 17.2 Q290.6 23.3 296.4 33.3 M296.4 33.3 Q307.1 32.4 312.7 25.6 M296.4 33.3 Q295.3 38.7 291.9 37.1 M291.9 37.1 Q296.1 38.3 303.6 41.4 M292.9 58.3 Q297.3 54.4 309.0 57.2 M292.9 58.3 Q294.1 67.0 298.7 71.0 M298.7 71.0 Q302.5 76.3 303.9 73.8 M298.7 71.0 Q295.9 80.2 288.6 82.7 M288.6 82.7 Q296.0 78.2 303.9 73.8 M294.4 98.4 Q297.4 99.0 306.7 92.8 M294.4 98.4 Q291.0 102.6 292.4 107.2 M292.4 107.2 Q298.1 111.6 302.9 110.6 M292.9 126.2 Q291.2 135.8 291.4 143.7 M291.4 143.7 Q298.8 142.2 311.8 144.3 M291.4 143.7 Q297.5 135.7 310.3 125.9 M290.7 164.8 Q292.5 174.3 289.5 185.4 M289.5 185.4 Q293.0 187.8 291.7 196.9 M289.5 185.4 Q297.3 189.5 305.1 191.5 M291.7 196.9 Q300.5 207.2 312.6 210.1 M292.4 213.1 Q298.9 217.6 297.9 221.2 M297.9 221.2 Q294.8 226.5 298.6 237.9 M298.6 237.9 Q305.3 239.4 306.6 235.1 M298.0 250.6 Q303.9 248.1 310.4 248.4 M293.6 261.4 Q303.4 264.8 312.9 270.9 M293.6 261.4 Q291.3 270.8 292.0 274.8 M292.0 274.8 Q300.9 277.8 303.2 280.6 M291.6 295.2 Q296.9 300.5 302.8 298.6 M303.5 -17.2 Q308.2 -11.2 312.1 0.7 M312.1 0.7 Q316.4 3.4 324.6 2.9 M312.1 0.7 Q312.0 9.2 309.0 10.8 M309.0 10.8 Q313.2 15.7 312.7 25.6 M312.7 25.6 Q319.5 27.7 320.0 22.6 M312.7 25.6 Q309.6 31.1 303.6 41.4 M303.6 41.4 Q307.6 48.5 309.0 57.2 M309.0 57.2 Q316.1 55.0 323.0 55.4 M309.0 57.2 Q313.0 64.9 323.7 69.7 M309.0 57.2 Q314.3 48.3 318.7 44.7 M303.9 73.8 Q316.1 74.9 323.7 69.7 M303.9 73.8 Q303.7 82.4 306.2 89.4 M306.2 89.4 Q313.8 83.5 320.6 82.8 M306.2 89.4 Q309.6 91.4 306.7 92.8 M306.7 92.8 Q310.8 95.1 320.6 96.7 M302.9 110.6 Q308.8 110.6 321.4 115.4 M310.3 125.9 Q317.9 129.1 326.6 130.3 M310.3 125.9 Q319.5 134.4 321.6 144.5 M311.8 144.3 Q311.3 151.3 312.0 155.5 M311.8 144.3 Q318.1 145.0 325.3 150.2 M311.8 144.3 Q319.8 133.6 326.6 130.3 M303.5 180.0 Q316.6 180.0 323.3 180.6 M303.5 180.0 Q301.6 182.5 305.1 191.5 M305.1 191.5 Q308.3 198.3 312.6 210.1 M312.6 210.1 Q319.8 212.4 327.0 214.7 M312.6 210.1 Q306.6 220.9 304.5 227.8 M304.5 227.8 Q312.1 223.5 320.7 218.7 M304.5 227.8 Q305.3 232.0 306.6 235.1 M306.6 235.1 Q308.9 241.1 317.3 243.2 M310.4 248.4 Q316.6 246.2 320.0 249.1 M310.4 248.4 Q313.5 259.5 312.9 270.9 M310.4 248.4 Q316.8 259.0 317.8 264.5 M310.4 248.4 Q313.4 242.3 317.3 243.2 M312.9 270.9 Q318.4 269.6 317.8 264.5 M312.9 270.9 Q304.7 273.6 303.2 280.6 M312.9 270.9 Q315.7 258.7 320.0 249.1 M303.2 280.6 Q299.4 292.7 302.8 298.6 M303.2 280.6 Q307.1 289.3 318.5 293.5 M302.8 298.6 Q314.5 292.3 318.5 293.5 M324.6 2.9 Q327.4 -2.2 332.1 -0.9 M324.6 2.9 Q321.8 9.9 321.8 9.6 M321.8 9.6 Q321.1 12.9 320.0 22.6 M321.8 9.6 Q330.6 17.7 336.8 25.8 M320.0 22.6 Q324.6 26.0 336.8 25.8 M320.0 22.6 Q321.5 36.4 318.7 44.7 M318.7 44.7 Q329.8 43.4 339.3 39.4 M318.7 44.7 Q320.6 53.2 323.0 55.4 M323.0 55.4 Q328.4 56.3 331.7 55.5 M323.0 55.4 Q321.8 60.4 323.7 69.7 M320.6 96.7 Q324.2 102.4 321.4 115.4 M321.4 115.4 Q330.7 117.1 336.7 115.7 M326.6 130.3 Q327.3 131.4 331.8 128.8 M325.3 150.2 Q328.7 161.6 333.1 166.8 M325.7 163.4 Q329.0 167.8 333.1 166.8 M323.3 180.6 Q331.6 175.9 335.1 178.3 M323.3 180.6 Q326.7 185.8 324.7 199.1 M324.7 199.1 Q322.5 205.9 327.0 214.7 M327.0 214.7 Q332.6 215.9 332.1 211.5 M327.0 214.7 Q325.9 216.6 320.7 218.7 M320.7 218.7 Q317.5 234.2 317.3 243.2 M320.7 218.7 Q331.7 226.1 336.1 237.4 M317.3 243.2 Q326.2 240.5 336.1 237.4 M320.0 249.1 Q327.1 254.6 339.2 256.9 M320.0 249.1 Q316.1 258.2 317.8 264.5 M317.8 264.5 Q319.9 272.5 320.2 282.6 M320.2 282.6 Q328.5 278.4 330.9 279.0 M320.2 282.6 Q315.4 286.6 318.5 293.5 M340.3 -14.7 Q346.6 -17.5 353.8 -13.8 M340.3 -14.7 Q333.7 -10.1 332.1 -0.9 M332.1 -0.9 Q342.9 -3.0 347.0 -3.6 M332.1 -0.9 Q332.3 0.4 333.2 8.8 M333.2 8.8 Q341.3 10.8 351.1 17.6 M336.8 25.8 Q344.4 31.0 354.3 30.5 M336.8 25.8 Q344.2 30.4 352.9 38.4 M336.8 25.8 Q343.4 21.2 351.1 17.6 M339.3 39.4 Q349.1 41.3 352.9 38.4 M339.3 39.4 Q336.5 44.2 331.7 55.5 M339.3 39.4 Q339.2 48.2 346.0 57.9 M331.7 55.5 Q338.0 54.5 346.0 57.9 M335.8 66.2 Q339.7 69.4 351.4 66.6 M336.1 85.4 Q342.9 73.3 351.4 66.6 M339.2 102.7 Q342.7 99.0 352.1 98.2 M331.8 128.8 Q339.0 126.6 350.2 124.3 M331.8 128.8 Q338.2 136.4 341.2 139.3 M341.2 139.3 Q347.4 143.4 347.6 141.5 M341.2 139.3 Q333.4 149.2 333.4 151.1 M333.4 151.1 Q334.3 162.9 333.1 166.8 M333.1 166.8 Q342.4 170.3 349.0 170.9 M333.1 166.8 Q333.6 171.7 335.1 178.3 M335.1 178.3 Q342.5 183.1 346.0 183.8 M339.7 201.3 Q336.9 206.5 332.1 211.5 M332.1 211.5 Q347.7 210.1 355.3 204.9 M332.1 211.5 Q333.7 217.9 335.4 224.1 M335.4 224.1 Q342.2 221.1 352.2 224.8 M335.4 224.1 Q335.7 229.1 336.1 237.4 M336.1 237.4 Q346.9 234.3 353.9 236.4 M336.1 237.4 Q334.4 244.3 339.2 256.9 M339.2 256.9 Q344.1 255.6 354.8 257.2 M339.2 256.9 Q333.4 257.3 333.7 264.5 M333.7 264.5 Q341.3 263.4 345.3 264.4 M330.9 279.0 Q341.2 284.9 347.2 283.6 M353.8 -13.8 Q348.8 -9.8 347.0 -3.6 M347.0 -3.6 Q360.2 -2.5 368.4 -2.3 M347.0 -3.6 Q350.0 5.6 351.1 17.6 M347.0 -3.6 Q354.9 5.9 359.7 16.5 M351.1 17.6 Q355.4 17.7 359.7 16.5 M351.1 17.6 Q350.4 25.1 354.3 30.5 M354.3 30.5 Q360.4 30.0 363.4 22.8 M354.3 30.5 Q356.5 35.1 352.9 38.4 M346.0 57.9 Q354.8 55.5 361.2 51.5 M346.0 57.9 Q352.6 62.0 351.4 66.6 M347.9 78.6 Q357.0 84.0 361.9 84.6 M352.1 98.2 Q358.0 98.7 369.0 92.7 M352.1 98.2 Q355.4 94.7 361.9 84.6 M353.8 116.6 Q358.4 114.9 368.7 114.6 M353.8 116.6 Q351.0 121.2 350.2 124.3 M350.2 124.3 Q350.0 132.6 347.6 141.5 M347.2 196.7 Q350.2 201.9 355.3 204.9 M355.3 204.9 Q357.8 208.7 366.9 205.7 M355.3 204.9 Q352.7 215.0 352.2 224.8 M355.3 204.9 Q358.8 201.9 363.6 196.9 M352.2 224.8 Q353.5 226.5 359.8 228.2 M353.9 236.4 Q352.3 244.8 354.8 257.2 M354.8 257.2 Q359.3 255.5 361.0 253.9 M354.8 257.2 Q360.9 243.9 364.5 235.0 M345.3 264.4 Q354.2 261.0 363.6 264.9 M345.3 264.4 Q342.9 272.8 347.2 283.6 M354.5 297.1 Q359.0 295.0 365.5 296.1 M368.0 -13.2 Q370.2 -13.2 379.1 -12.9 M368.4 -2.3 Q364.0 7.0 359.7 16.5 M363.4 22.8 Q372.3 25.9 376.9 31.7 M363.4 22.8 Q362.9 30.8 367.3 38.0 M367.3 38.0 Q370.7 42.2 380.4 45.8 M367.3 38.0 Q365.3 47.2 361.2 51.5 M361.2 51.5 Q372.5 59.1 378.7 61.3 M361.2 51.5 Q360.7 56.5 365.3 66.3 M365.3 66.3 Q372.5 64.1 376.0 68.9 M361.9 84.6 Q367.3 83.6 378.7 82.1 M361.9 84.6 Q369.0 89.9 369.0 92.7 M369.0 92.7 Q372.1 96.6 374.1 100.0 M369.0 92.7 Q368.5 101.3 368.7 114.6 M368.7 114.6 Q373.6 116.7 376.4 116.1 M368.7 114.6 Q364.9 121.1 361.4 129.7 M361.4 129.7 Q367.3 134.6 365.5 139.6 M365.5 139.6 Q360.4 148.7 361.1 153.4 M361.1 153.4 Q371.6 152.1 376.1 150.7 M361.1 153.4 Q364.3 148.4 373.7 136.6 M362.4 163.5 Q367.9 167.1 379.9 165.0 M362.4 163.5 Q358.9 171.7 360.5 179.5 M362.4 163.5 Q367.1 154.9 376.1 150.7 M360.5 179.5 Q366.2 176.9 377.1 180.9 M360.5 179.5 Q365.0 189.5 363.6 196.9 M363.6 196.9 Q375.5 197.3 383.5 195.5 M363.6 196.9 Q366.7 201.0 366.9 205.7 M363.6 196.9 Q370.8 186.6 377.1 180.9 M366.9 205.7 Q373.2 212.4 373.0 215.3 M366.9 205.7 Q360.3 219.0 359.8 228.2 M364.5 235.0 Q371.4 233.2 382.0 239.3 M364.5 235.0 Q372.5 228.0 383.2 218.9 M361.0 253.9 Q369.7 253.8 382.6 253.4 M361.0 253.9 Q359.5 257.4 363.6 264.9 M363.6 264.9 Q370.1 264.0 379.4 269.4 M363.6 264.9 Q363.7 266.7 368.9 274.7 M363.6 264.9 Q368.8 267.4 372.9 275.6 M363.6 264.9 Q374.8 262.1 382.6 253.4 M372.9 5.2 Q377.3 -0.8 387.7 -1.7 M373.1 12.5 Q383.2 12.5 388.3 9.2 M376.9 31.7 Q384.7 34.0 397.0 32.6 M376.9 31.7 Q379.3 41.1 380.4 45.8 M380.4 45.8 Q390.0 37.7 396.4 37.4 M380.4 45.8 Q379.6 55.3 378.7 61.3 M378.7 61.3 Q383.6 64.2 393.0 60.8 M378.7 61.3 Q378.3 67.9 376.0 68.9 M376.0 68.9 Q389.1 74.9 396.2 88.6 M378.7 82.1 Q376.4 93.8 374.1 100.0 M374.1 100.0 Q386.4 98.0 392.9 95.5 M374.1 100.0 Q379.1 106.2 376.4 116.1 M376.4 116.1 Q387.3 113.7 394.6 114.6 M379.8 120.6 Q379.8 130.4 373.7 136.6 M373.7 136.6 Q386.7 140.6 394.1 136.9 M373.7 136.6 Q373.8 140.0 376.1 150.7 M376.1 150.7 Q386.7 151.3 390.8 154.5 M376.1 150.7 Q381.8 160.5 379.9 165.0 M377.1 180.9 Q384.6 185.2 389.8 181.8 M383.5 195.5 Q381.9 202.1 373.0 215.3 M383.5 195.5 Q385.2 201.0 390.2 206.6 M383.2 218.9 Q384.6 229.7 382.0 239.3 M382.0 239.3 Q387.0 243.9 390.9 242.7 M382.0 239.3 Q383.3 249.3 382.6 253.4 M382.6 253.4 Q387.9 254.8 388.3 257.0 M379.4 269.4 Q378.4 274.7 372.9 275.6 M389.1 -19.1 Q395.8 -18.4 400.7 -13.4 M389.1 -19.1 Q397.2 -9.8 407.2 -1.7 M387.7 -1.7 Q386.2 4.7 388.3 9.2 M388.3 9.2 Q396.4 12.3 407.7 14.2 M388.3 9.2 Q396.7 3.9 407.2 -1.7 M397.0 32.6 Q407.0 28.9 409.7 26.4 M396.4 37.4 Q403.9 42.5 408.9 42.2 M396.4 37.4 Q391.2 46.6 393.0 60.8 M396.2 88.6 Q401.6 83.9 407.9 80.0 M396.2 88.6 Q393.0 89.1 392.9 95.5 M392.9 95.5 Q400.1 97.6 402.7 99.2 M394.6 114.6 Q401.1 115.6 403.5 115.7 M389.7 125.5 Q390.5 134.1 394.1 136.9 M389.7 125.5 Q396.9 132.9 410.6 145.5 M394.1 136.9 Q406.0 139.3 410.6 145.5 M394.1 136.9 Q394.4 143.9 390.8 154.5 M390.5 172.3 Q397.4 172.9 407.5 170.2 M390.5 172.3 Q388.7 173.5 389.8 181.8 M389.8 181.8 Q393.1 187.0 395.5 190.8 M395.5 190.8 Q403.2 194.7 405.0 196.5 M390.2 206.6 Q399.4 206.0 401.8 208.9 M392.5 229.2 Q399.0 222.6 411.4 220.1 M390.9 242.7 Q397.0 243.0 407.3 247.7 M390.1 264.1 Q402.8 269.0 409.9 268.1 M389.5 284.2 Q391.9 284.5 388.9 289.1 M400.7 -13.4 Q410.4 -15.9 421.0 -12.4 M409.7 26.4 Q409.1 36.9 408.9 42.2 M408.9 42.2 Q416.1 45.1 423.3 41.3 M408.9 42.2 Q406.8 49.3 411.4 58.0 M411.4 58.0 Q411.4 66.3 410.8 69.1 M410.8 69.1 Q417.5 68.5 423.5 68.1 M407.9 80.0 Q415.8 82.7 425.2 85.2 M402.7 99.2 Q401.0 105.4 403.5 115.7 M403.5 115.7 Q410.5 115.4 425.2 116.3 M410.6 145.5 Q413.6 147.8 417.3 144.4 M410.6 145.5 Q403.8 154.0 403.5 155.4 M403.5 155.4 Q406.8 156.7 417.8 154.4 M407.5 170.2 Q413.6 170.6 417.9 169.3 M407.5 170.2 Q406.9 177.3 405.0 177.6 M405.0 196.5 Q405.7 198.9 401.8 208.9 M401.8 208.9 Q414.6 205.4 419.6 204.9 M401.8 208.9 Q406.6 210.5 411.4 220.1 M411.4 220.1 Q415.3 222.1 421.9 223.5 M411.4 220.1 Q410.9 229.4 409.8 235.6 M411.4 220.1 Q416.0 214.2 419.6 204.9 M409.8 235.6 Q412.8 237.7 414.6 233.3 M409.8 235.6 Q414.3 225.7 421.9 223.5 M407.3 247.7 Q408.6 249.8 417.0 251.0 M407.3 247.7 Q408.3 258.7 409.9 268.1 M409.9 268.1 Q411.7 271.5 420.0 267.6 M403.7 278.4 Q412.1 274.7 424.7 276.2 M404.4 294.3 Q413.0 293.5 416.6 293.1 M421.0 -12.4 Q427.9 -11.1 432.9 -11.1 M421.0 -12.4 Q433.6 -5.4 438.4 1.0 M414.6 2.7 Q422.4 10.3 425.4 12.7 M425.4 12.7 Q419.1 22.0 417.8 28.4 M417.8 28.4 Q423.2 28.2 429.5 26.5 M423.3 41.3 Q423.8 45.7 418.6 53.1 M423.3 41.3 Q425.7 44.8 431.9 52.4 M423.3 41.3 Q426.0 37.3 429.5 26.5 M418.6 53.1 Q418.9 57.4 423.5 68.1 M418.6 53.1 Q425.1 49.1 432.5 37.3 M425.2 85.2 Q428.3 87.3 432.3 88.8 M425.2 85.2 Q430.1 94.1 434.1 103.2 M425.2 85.2 Q428.4 78.8 435.7 67.7 M417.2 96.1 Q422.6 105.5 425.2 116.3 M425.2 116.3 Q433.2 114.3 435.4 112.3 M425.2 116.3 Q430.4 112.9 434.1 103.2 M425.0 120.8 Q430.2 122.6 437.5 122.8 M417.8 154.4 Q425.8 151.7 429.2 154.7 M417.8 154.4 Q420.5 160.5 417.9 169.3 M417.8 154.4 Q420.7 159.0 429.7 168.8 M419.3 185.6 Q418.4 194.3 422.5 195.2 M422.5 195.2 Q419.7 197.8 419.6 204.9 M419.6 204.9 Q424.0 217.7 421.9 223.5 M421.9 223.5 Q419.6 224.5 414.6 233.3 M414.6 233.3 Q427.4 237.2 432.9 233.6 M417.0 251.0 Q419.6 260.3 420.0 267.6 M420.0 267.6 Q427.9 270.0 430.4 269.0 M420.0 267.6 Q422.9 274.0 424.7 276.2 M424.7 276.2 Q432.9 276.3 434.7 284.1 M424.7 276.2 Q431.1 287.5 438.4 294.2 M432.9 -11.1 Q441.2 -17.5 444.1 -17.3 M438.4 1.0 Q446.8 -1.2 449.1 -3.9 M436.1 16.7 Q443.6 16.3 448.2 14.1 M432.5 37.3 Q437.5 44.1 447.6 55.2 M431.9 52.4 Q436.7 58.9 435.7 67.7 M435.7 67.7 Q432.4 74.3 432.3 88.8 M432.3 88.8 Q440.8 90.3 450.0 84.9 M432.3 88.8 Q429.5 94.7 434.1 103.2 M434.1 103.2 Q431.5 104.6 435.4 112.3 M435.4 112.3 Q438.0 113.8 437.5 122.8 M435.4 112.3 Q439.4 124.2 449.4 130.0 M437.5 122.8 Q435.8 129.7 438.3 139.0 M438.3 139.0 Q449.6 136.7 452.9 135.2 M429.2 154.7 Q434.7 153.5 444.6 155.4 M435.4 184.5 Q443.0 181.3 446.9 184.9 M436.1 190.6 Q429.6 201.8 428.5 212.3 M428.5 212.3 Q439.3 211.1 445.1 207.0 M434.6 228.6 Q436.6 226.8 444.3 225.0 M434.6 228.6 Q434.5 232.4 432.9 233.6 M434.6 228.6 Q439.6 219.0 445.1 207.0 M432.9 233.6 Q427.9 243.7 428.7 246.8 M428.7 246.8 Q437.8 249.5 452.0 251.5 M428.7 246.8 Q430.4 260.4 430.4 269.0 M430.4 269.0 Q439.4 268.9 447.1 263.3 M430.4 269.0 Q435.7 273.4 434.7 284.1 M430.4 269.0 Q441.7 264.0 452.0 251.5 M438.4 294.2 Q437.7 294.4 443.2 296.0 M444.1 -17.3 Q453.4 -14.9 463.9 -13.1 M444.1 -17.3 Q449.5 -13.4 449.1 -3.9 M449.1 -3.9 Q457.3 -0.9 461.0 -1.1 M448.2 14.1 Q453.7 10.6 464.3 8.7 M448.2 14.1 Q447.1 17.3 442.8 23.3 M442.8 23.3 Q457.9 19.5 466.1 23.5 M452.9 41.9 Q449.2 52.0 447.6 55.2 M447.6 55.2 Q454.0 58.2 456.6 60.2 M451.3 71.7 Q457.5 73.3 460.9 68.5 M451.3 71.7 Q452.3 63.6 456.6 60.2 M450.0 84.9 Q454.3 89.7 460.2 88.1 M450.0 84.9 Q446.8 91.9 444.1 95.1 M450.0 84.9 Q457.4 91.6 460.2 99.7 M444.1 95.1 Q455.9 96.9 460.2 99.7 M445.5 106.9 Q447.5 118.4 449.4 130.0 M449.4 130.0 Q451.1 129.2 452.9 135.2 M452.9 135.2 Q447.0 144.0 444.6 155.4 M444.6 155.4 Q442.6 157.3 442.7 164.9 M442.7 164.9 Q452.0 166.4 459.6 162.8 M442.7 164.9 Q448.5 178.2 446.9 184.9 M446.9 184.9 Q456.6 182.7 465.4 179.2 M446.9 184.9 Q441.2 188.7 443.0 191.1 M444.3 225.0 Q452.4 224.3 462.6 223.6 M444.3 225.0 Q444.5 226.6 444.4 232.6 M444.4 232.6 Q451.8 241.8 452.0 251.5 M452.0 251.5 Q457.8 248.2 460.5 248.9 M452.0 251.5 Q451.7 254.2 447.1 263.3 M447.1 263.3 Q457.0 264.3 461.0 267.4 M463.9 -13.1 Q468.0 -13.4 479.9 -12.1 M461.0 -1.1 Q473.7 0.5 480.9 5.5 M461.0 -1.1 Q461.0 6.6 464.3 8.7 M466.1 23.5 Q458.3 29.7 458.4 40.7 M458.4 40.7 Q470.1 37.8 474.9 42.1 M458.4 40.7 Q457.2 48.3 456.6 60.2 M456.6 60.2 Q465.2 66.6 478.0 65.5 M460.9 68.5 Q459.0 76.9 460.2 88.1 M460.2 88.1 Q473.7 86.6 479.9 86.6 M460.2 88.1 Q465.7 80.8 478.0 65.5 M460.2 99.7 Q471.5 93.1 478.9 92.8 M460.2 99.7 Q462.2 106.6 467.1 111.1 M467.1 111.1 Q469.5 111.2 478.4 108.1 M466.5 126.6 Q470.6 130.1 470.7 128.3 M466.5 126.6 Q462.3 129.8 460.8 139.6 M460.8 139.6 Q470.2 141.8 478.1 143.0 M460.8 139.6 Q459.2 145.3 460.3 153.3 M459.6 162.8 Q471.5 159.1 480.3 163.2 M459.6 162.8 Q464.6 172.5 465.4 179.2 M459.6 162.8 Q463.7 157.3 473.0 150.6 M465.4 179.2 Q476.3 179.0 480.6 185.4 M465.4 179.2 Q459.6 189.8 457.9 192.7 M457.9 192.7 Q467.8 192.7 478.8 192.6 M457.9 192.7 Q457.0 200.3 462.5 213.2 M457.9 192.7 Q470.1 197.4 478.4 205.5 M462.5 213.2 Q469.6 209.1 478.4 205.5 M462.5 213.2 Q465.8 215.0 462.6 223.6 M462.5 213.2 Q472.1 202.6 478.8 192.6 M462.6 223.6 Q469.0 224.9 473.7 227.5 M462.6 223.6 Q466.7 230.1 465.2 235.1 M462.6 223.6 Q465.9 233.0 474.9 236.4 M465.2 235.1 Q470.1 238.7 474.9 236.4 M465.2 235.1 Q469.4 240.4 479.8 251.6 M465.2 235.1 Q472.4 230.4 473.7 227.5 M460.5 248.9 Q459.4 255.2 461.0 267.4 M461.0 267.4 Q467.7 268.1 477.4 267.4 M461.0 267.4 Q473.5 274.5 480.0 284.8 M462.9 277.8 Q469.8 280.3 480.0 284.8 M462.9 277.8 Q459.0 283.9 461.7 290.7 M462.9 277.8 Q470.3 275.5 477.4 267.4 M461.7 290.7 Q468.3 291.6 472.4 292.5 M479.9 -12.1 Q476.5 -4.5 480.9 5.5 M479.9 -12.1 Q483.6 -5.1 494.4 -5.2 M480.9 5.5 Q486.2 3.8 494.4 -5.2 M480.9 5.5 Q475.1 9.8 477.1 13.3 M477.1 13.3 Q483.8 12.5 492.2 13.6 M477.1 13.3 Q476.0 21.8 481.4 28.4 M477.1 13.3 Q485.3 20.3 495.5 26.9 M477.1 13.3 Q482.9 2.8 494.4 -5.2 M481.4 28.4 Q480.4 32.8 474.9 42.1 M471.9 58.8 Q476.3 59.6 478.0 65.5 M478.0 65.5 Q488.1 69.0 491.2 66.9 M479.9 86.6 Q481.4 93.0 478.9 92.8 M478.4 108.1 Q487.9 108.8 492.8 108.2 M478.4 108.1 Q473.4 122.1 470.7 128.3 M478.1 143.0 Q482.8 142.3 491.4 144.9 M478.1 143.0 Q476.1 150.2 473.0 150.6 M473.0 150.6 Q480.2 149.7 490.7 151.0 M473.0 150.6 Q478.8 156.7 480.3 163.2 M473.0 150.6 Q484.5 160.5 490.0 168.2 M473.0 150.6 Q479.0 144.9 491.4 144.9 M480.3 163.2 Q484.4 177.9 480.6 185.4 M480.6 185.4 Q488.3 181.2 494.7 183.9 M480.6 185.4 Q481.0 187.3 478.8 192.6 M480.6 185.4 Q488.2 195.8 490.8 200.8 M478.8 192.6 Q488.4 198.0 490.8 200.8 M478.4 205.5 Q478.6 208.1 485.7 212.9 M478.4 205.5 Q474.0 216.0 473.7 227.5 M478.4 205.5 Q482.3 220.8 491.7 228.4 M473.7 227.5 Q485.2 230.6 491.7 228.4 M473.7 227.5 Q478.7 220.6 485.7 212.9 M479.8 251.6 Q485.6 250.8 492.2 257.2 M479.8 251.6 Q475.8 256.0 477.4 267.4 M477.4 267.4 Q474.9 277.1 480.0 284.8 M480.0 284.8 Q473.0 287.0 472.4 292.5 M472.4 292.5 Q478.3 299.2 488.3 298.6 M495.5 26.9 Q496.4 33.8 494.5 37.6 M494.5 37.6 Q495.0 44.0 487.7 53.5 M487.7 53.5 Q491.8 59.1 491.2 66.9 M491.2 66.9 Q489.3 77.2 492.0 83.0 M492.6 126.6 Q489.5 137.5 491.4 144.9 M491.4 144.9 Q495.0 144.0 490.7 151.0 M490.0 168.2 Q490.9 176.2 494.7 183.9 M494.7 183.9 Q489.8 195.3 490.8 200.8 M490.8 200.8 Q491.7 203.9 485.7 212.9 M485.7 212.9 Q486.2 220.4 491.7 228.4" fill="none" stroke="#fff" stroke-width="1.05" opacity="0.85"/><path d="M0.0 17.0 L17.0 25.0 L57.0 40.0 L102.0 57.0 L147.0 69.0 L187.0 85.0 L217.0 90.0" fill="none" stroke="#fff" stroke-width="1.7"/><path d="M104.0 281.0 L110.0 250.0 L117.0 230.0 L132.0 200.0 L156.6 152.4 L187.0 120.0 L217.0 90.0 L247.0 67.0 L297.0 40.0 L327.0 20.0 L357.0 7.0 L391.0 0.0" fill="none" stroke="#fff" stroke-width="1.7"/><path d="M0.0 125.0 L57.0 130.0 L107.0 148.0 L156.6 152.4" fill="none" stroke="#fff" stroke-width="1.7"/><path d="M232.0 135.0 L277.0 160.0 L307.0 210.0 L327.0 230.0 L367.0 260.0 L407.0 250.0 L447.0 260.0" fill="none" stroke="#fff" stroke-width="1.7"/><path d="M346.0 0.0 L346.0 60.0 L327.0 110.0 L307.0 145.0" fill="none" stroke="#fff" stroke-width="1.7"/><path d="M397.0 110.0 L382.0 170.0 L377.0 220.0 L367.0 260.0" fill="none" stroke="#fff" stroke-width="1.7"/><path d="M110.0 0.0 L102.0 57.0 L117.0 130.0" fill="none" stroke="#fff" stroke-width="1.7"/><path d="M222.0 55.0 L222.0 0.0" fill="none" stroke="#fff" stroke-width="1.7"/><path d="M102.0 57.0 L72.0 0.0" fill="none" stroke="#fff" stroke-width="1.7"/><path d="M222.0 55.0 L252.0 0.0" fill="none" stroke="#fff" stroke-width="1.7"/><path d="M156.6 152.4 L67.0 281.0" fill="none" stroke="#fff" stroke-width="1.7"/><path d="M156.6 152.4 L132.0 281.0" fill="none" stroke="#fff" stroke-width="1.7"/><path d="M0.0 45.0 L47.0 50.0 L102.0 57.0" fill="none" stroke="#fff" stroke-width="1.7"/><path d="M217.0 90.0 L167.0 115.0 L156.6 152.4" fill="none" stroke="#fff" stroke-width="1.7"/><path d="M252.0 25.0 L297.0 10.0 L347.0 0.0" fill="none" stroke="#fff" stroke-width="1.7"/><path d="M352.0 10.0 L387.0 30.0 L427.0 40.0 L475.0 50.0" fill="none" stroke="#fff" stroke-width="1.7"/><path d="M307.0 145.0 L357.0 130.0 L407.0 100.0" fill="none" stroke="#fff" stroke-width="1.7"/><path d="M0.0 260.0 L57.0 250.0 L107.0 240.0" fill="none" stroke="#fff" stroke-width="1.7"/><path d="M287.0 270.0 L337.0 240.0 L387.0 190.0 L437.0 170.0" fill="none" stroke="#fff" stroke-width="1.7"/><polygon points="252.0,75.0 259.0,70.0 282.0,73.0 297.0,110.0 287.0,135.0 277.0,145.0 262.0,168.0 258.0,193.0 279.0,189.0 285.0,199.0 268.0,214.0 264.0,231.0 269.0,245.0 277.0,260.0 287.0,281.0 251.0,281.0 245.0,266.0 233.0,243.0 227.0,210.0 227.0,176.0 233.0,145.0 239.0,128.0 245.0,100.0" fill="#8ab4f8"/><polygon points="254.0,72.0 257.7,61.0 272.0,59.0 283.0,47.0 293.7,34.0 299.0,27.0 313.4,23.0 319.0,36.0 329.6,27.0 335.0,30.6 326.0,46.8 310.0,54.0 332.0,65.0 323.0,68.0 301.0,68.0 283.0,72.0 272.0,77.0" fill="#8ab4f8"/><polygon points="273.0,184.0 297.0,179.0 319.0,182.0 303.0,189.0 275.0,194.0" fill="#8ab4f8"/><polygon points="265.0,238.0 282.0,242.0 289.0,265.0 273.0,258.0" fill="#8ab4f8"/><path d="M156.7 159.0 L155.6 189.0 L147.0 193.0 L130.0 199.0 L124.0 214.0 L118.0 231.0 L118.0 248.0 L130.0 258.0 L147.0 254.0 L160.0 252.0 L168.0 265.0 L175.0 269.0 L187.0 281.0" fill="none" stroke="#8ab4f8" stroke-width="8" stroke-linejoin="round"/><path d="M208.0 210.0 L210.0 230.0 L217.0 248.0 L229.0 260.0" fill="none" stroke="#8ab4f8" stroke-width="3"/><path d="M283.5 10.0 L289.0 20.0 L294.6 28.0" fill="none" stroke="#8ab4f8" stroke-width="3"/><polygon points="370.0,0.0 369.0,19.0 367.0,39.0 368.6,50.0 380.0,69.0 390.0,81.0 392.0,94.0 394.0,108.0 394.0,120.0 403.0,127.0 409.0,143.0 421.0,158.0 430.0,166.0 438.0,174.0 442.0,189.0 445.0,200.0 443.0,230.0 439.0,267.0 437.0,281.0 475.0,281.0 475.0,165.0 467.0,160.0 459.0,140.0 462.0,131.0 465.0,120.0 469.0,108.0 465.0,100.0 444.0,96.0 430.0,94.0 405.0,69.0 382.0,50.0 376.0,19.0 376.0,0.0" fill="#8ab4f8"/><polygon points="425.0,203.0 439.0,198.0 441.0,210.0 427.0,210.0" fill="#8ab4f8"/><path d="M343.0 0.0 L345.0 90.0 L347.0 170.0 L349.0 230.0 L407.0 232.0 L447.0 233.0" fill="none" stroke="#777" stroke-width="0.8" stroke-dasharray="1.3 1.5"/><path d="M374.0 40.0 L392.0 70.0 L417.0 110.0 L439.0 150.0" fill="none" stroke="#777" stroke-width="0.8" stroke-dasharray="1.3 1.5"/><path d="M15.0 74.0 L32.0 90.0 L47.0 113.0" fill="none" stroke="#777" stroke-width="0.8" stroke-dasharray="1.3 1.5"/><path d="M152.0 170.0 L167.0 155.0 L177.0 145.0" fill="none" stroke="#777" stroke-width="0.8" stroke-dasharray="1.3 1.5"/><path d="M39.0 23.0 L50.0 50.0 L47.0 90.0 L77.0 78.0 L92.0 90.0 L89.0 115.0 L117.0 125.0 L147.0 135.0 L162.0 145.0" fill="none" stroke="#4f86e0" stroke-width="0.9" stroke-dasharray="1.5 1"/><path d="M130.0 202.0 L120.0 230.0 L127.0 256.0 L167.0 254.0 L175.0 270.0" fill="none" stroke="#6a8fb0" stroke-width="0.6" stroke-dasharray="1.2 1.2"/><text x="31.0" y="10.0" font-family="Liberation Sans" font-size="9.5" fill="#474747" text-anchor="start" stroke="#fff" stroke-width="2.2" stroke-opacity="0.7" paint-order="stroke">Hagerstown</text><text x="0.0" y="46.0" font-family="Liberation Sans" font-size="9.5" fill="#474747" text-anchor="start" stroke="#fff" stroke-width="2.2" stroke-opacity="0.7" paint-order="stroke">Martinsburg</text><text x="82.0" y="53.0" font-family="Liberation Sans" font-size="9.5" fill="#474747" text-anchor="start" stroke="#fff" stroke-width="2.2" stroke-opacity="0.7" paint-order="stroke">Frederick</text><text x="243.0" y="31.0" font-family="Liberation Sans" font-size="9.5" fill="#474747" text-anchor="start" stroke="#fff" stroke-width="2.2" stroke-opacity="0.7" paint-order="stroke">Bel Air</text><text x="346.0" y="22.0" font-family="Liberation Sans" font-size="9.5" fill="#474747" text-anchor="start" stroke="#fff" stroke-width="2.2" stroke-opacity="0.7" paint-order="stroke">New Castle</text><text x="120.5" y="115.0" font-family="Liberation Sans" font-size="9.5" fill="#474747" text-anchor="start" stroke="#fff" stroke-width="2.2" stroke-opacity="0.7" paint-order="stroke">Rockville</text><text x="102.0" y="160.0" font-family="Liberation Sans" font-size="9.5" fill="#474747" text-anchor="start" stroke="#fff" stroke-width="2.2" stroke-opacity="0.7" paint-order="stroke">Fairfax</text><text x="282.0" y="174.0" font-family="Liberation Sans" font-size="9.5" fill="#474747" text-anchor="start" stroke="#fff" stroke-width="2.2" stroke-opacity="0.7" paint-order="stroke">Easton</text><text x="272.0" y="214.5" font-family="Liberation Sans" font-size="9.5" fill="#474747" text-anchor="start" stroke="#fff" stroke-width="2.2" stroke-opacity="0.7" paint-order="stroke">Cambridge</text><text x="365.0" y="100.0" font-family="Liberation Sans" font-size="9.5" fill="#474747" text-anchor="start" stroke="#fff" stroke-width="2.2" stroke-opacity="0.7" paint-order="stroke">Dover</text><text x="0.0" y="230.0" font-family="Liberation Sans" font-size="9.5" fill="#474747" text-anchor="start" stroke="#fff" stroke-width="2.2" stroke-opacity="0.7" paint-order="stroke">Culpeper</text><text x="64.0" y="262.0" font-family="Liberation Sans" font-size="9.5" fill="#474747" text-anchor="start" stroke="#fff" stroke-width="2.2" stroke-opacity="0.7" paint-order="stroke">Fredericksburg</text><text x="346.0" y="251.0" font-family="Liberation Sans" font-size="9.5" fill="#474747" text-anchor="start" stroke="#fff" stroke-width="2.2" stroke-opacity="0.7" paint-order="stroke">Salisbury</text><text x="420.0" y="174.0" font-family="Liberation Sans" font-size="9.5" fill="#474747" text-anchor="start" stroke="#fff" stroke-width="2.2" stroke-opacity="0.7" paint-order="stroke">Lewes</text><text x="422.0" y="197.5" font-family="Liberation Sans" font-size="9.5" fill="#474747" text-anchor="start" stroke="#fff" stroke-width="2.2" stroke-opacity="0.7" paint-order="stroke">Rehoboth</text><text x="443.0" y="208.0" font-family="Liberation Sans" font-size="9.5" fill="#474747" text-anchor="start" stroke="#fff" stroke-width="2.2" stroke-opacity="0.7" paint-order="stroke">B</text><text x="418.0" y="254.0" font-family="Liberation Sans" font-size="9.5" fill="#474747" text-anchor="start" stroke="#fff" stroke-width="2.2" stroke-opacity="0.7" paint-order="stroke">Oce</text><text x="410.0" y="271.0" font-family="Liberation Sans" font-size="9.5" fill="#474747" text-anchor="start" stroke="#fff" stroke-width="2.2" stroke-opacity="0.7" paint-order="stroke">Berlin</text><text x="458.6" y="132.0" font-family="Liberation Sans" font-size="9.5" fill="#474747" text-anchor="start" stroke="#fff" stroke-width="2.2" stroke-opacity="0.7" paint-order="stroke">Wil</text><text x="0.0" y="96.0" font-family="Liberation Sans" font-size="9.5" fill="#474747" text-anchor="start" stroke="#fff" stroke-width="2.2" stroke-opacity="0.7" paint-order="stroke">ster</text><text x="0.0" y="147.0" font-family="Liberation Sans" font-size="9.5" fill="#474747" text-anchor="start" stroke="#fff" stroke-width="2.2" stroke-opacity="0.7" paint-order="stroke">yal</text><text x="328.0" y="3.0" font-family="Liberation Sans" font-size="9.5" fill="#474747" text-anchor="start" stroke="#fff" stroke-width="2.2" stroke-opacity="0.7" paint-order="stroke">Newark</text><text x="187.7" y="75.0" font-family="Liberation Sans" font-size="14.7" fill="#222" text-anchor="start" stroke="#fff" stroke-width="2.2" stroke-opacity="0.7" paint-order="stroke">Baltimore</text><text x="118.5" y="147.0" font-family="Liberation Sans" font-size="14.5" fill="#222" text-anchor="start" stroke="#fff" stroke-width="2.2" stroke-opacity="0.7" paint-order="stroke">Washington</text><circle cx="58.299999999999955" cy="13.5" r="1.8" fill="#fff" stroke="#555" stroke-width="0.9"/><circle cx="21.399999999999977" cy="49" r="1.8" fill="#fff" stroke="#555" stroke-width="0.9"/><circle cx="102.20000000000005" cy="57" r="1.8" fill="#fff" stroke="#555" stroke-width="0.9"/><circle cx="256.5" cy="34.5" r="1.8" fill="#fff" stroke="#555" stroke-width="0.9"/><circle cx="140" cy="119" r="1.8" fill="#fff" stroke="#555" stroke-width="0.9"/><circle cx="116.59999999999991" cy="163.5" r="1.8" fill="#fff" stroke="#555" stroke-width="0.9"/><circle cx="297.29999999999995" cy="177" r="1.8" fill="#fff" stroke="#555" stroke-width="0.9"/><circle cx="296" cy="216" r="1.8" fill="#fff" stroke="#555" stroke-width="0.9"/><circle cx="377" cy="104" r="1.8" fill="#fff" stroke="#555" stroke-width="0.9"/><circle cx="17.5" cy="233" r="1.8" fill="#fff" stroke="#555" stroke-width="0.9"/><circle cx="95" cy="264.5" r="1.8" fill="#fff" stroke="#555" stroke-width="0.9"/><circle cx="365.29999999999995" cy="255" r="1.8" fill="#fff" stroke="#555" stroke-width="0.9"/><circle cx="433.4000000000001" cy="177" r="1.8" fill="#fff" stroke="#555" stroke-width="0.9"/><circle cx="439" cy="189" r="1.8" fill="#fff" stroke="#555" stroke-width="0.9"/><circle cx="431" cy="259" r="1.8" fill="#fff" stroke="#555" stroke-width="0.9"/><circle cx="285.70000000000005" cy="6" r="1.8" fill="#fff" stroke="#555" stroke-width="0.9"/><circle cx="156.5999999999999" cy="152.39999999999998" r="3" fill="#fff" stroke="#222" stroke-width="1.2"/><circle cx="156.5999999999999" cy="152.39999999999998" r="1" fill="#222"/><g transform="translate(11.5,8.5)"><path d="M0 1.5 Q6 -0.5 12 1.5 L12 8 Q12 12.5 6 14 Q0 12.5 0 8 Z" fill="#2f6cc4" stroke="#fff" stroke-width="0.9"/><path d="M0.6 1.6 Q6 -0.3 11.4 1.6 L11.4 3.6 L0.6 3.6 Z" fill="#d83a3a"/><text x="6" y="11" font-size="6.5" font-family="Liberation Sans" font-weight="bold" fill="#fff" text-anchor="middle">70</text></g><g transform="translate(142.9000000000001,62.19999999999999)"><path d="M0 1.5 Q6 -0.5 12 1.5 L12 8 Q12 12.5 6 14 Q0 12.5 0 8 Z" fill="#2f6cc4" stroke="#fff" stroke-width="0.9"/><path d="M0.6 1.6 Q6 -0.3 11.4 1.6 L11.4 3.6 L0.6 3.6 Z" fill="#d83a3a"/><text x="6" y="11" font-size="6.5" font-family="Liberation Sans" font-weight="bold" fill="#fff" text-anchor="middle">70</text></g><g transform="translate(309.5999999999999,6.600000000000023)"><path d="M0 1.5 Q6 -0.5 12 1.5 L12 8 Q12 12.5 6 14 Q0 12.5 0 8 Z" fill="#2f6cc4" stroke="#fff" stroke-width="0.9"/><path d="M0.6 1.6 Q6 -0.3 11.4 1.6 L11.4 3.6 L0.6 3.6 Z" fill="#d83a3a"/><text x="6" y="11" font-size="6.5" font-family="Liberation Sans" font-weight="bold" fill="#fff" text-anchor="middle">95</text></g><g transform="translate(172.79999999999995,105.70000000000005)"><path d="M0 1.5 Q6 -0.5 12 1.5 L12 8 Q12 12.5 6 14 Q0 12.5 0 8 Z" fill="#2f6cc4" stroke="#fff" stroke-width="0.9"/><path d="M0.6 1.6 Q6 -0.3 11.4 1.6 L11.4 3.6 L0.6 3.6 Z" fill="#d83a3a"/><text x="6" y="11" font-size="6.5" font-family="Liberation Sans" font-weight="bold" fill="#fff" text-anchor="middle">95</text></g><g transform="translate(100.90000000000009,218.39999999999998)"><path d="M0 1.5 Q6 -0.5 12 1.5 L12 8 Q12 12.5 6 14 Q0 12.5 0 8 Z" fill="#2f6cc4" stroke="#fff" stroke-width="0.9"/><path d="M0.6 1.6 Q6 -0.3 11.4 1.6 L11.4 3.6 L0.6 3.6 Z" fill="#d83a3a"/><text x="6" y="11" font-size="6.5" font-family="Liberation Sans" font-weight="bold" fill="#fff" text-anchor="middle">95</text></g><g transform="translate(384.5999999999999,-7)"><path d="M0 1.5 Q6 -0.5 12 1.5 L12 8 Q12 12.5 6 14 Q0 12.5 0 8 Z" fill="#2f6cc4" stroke="#fff" stroke-width="0.9"/><path d="M0.6 1.6 Q6 -0.3 11.4 1.6 L11.4 3.6 L0.6 3.6 Z" fill="#d83a3a"/><text x="6" y="11" font-size="6.5" font-family="Liberation Sans" font-weight="bold" fill="#fff" text-anchor="middle">295</text></g><g transform="translate(104.0,0.8000000000000114)"><path d="M1 1 Q6.0 2.5 11 1 L12 3 L12 8 Q12 13 6.0 13.5 Q0 13 0 8 L0 3 Z" fill="#fff" stroke="#888" stroke-width="0.9"/><text x="6.0" y="10" font-size="6.5" font-family="Liberation Sans" fill="#333" text-anchor="middle">15</text></g><g transform="translate(5.7000000000000455,116.60000000000002)"><path d="M1 1 Q6.0 2.5 11 1 L12 3 L12 8 Q12 13 6.0 13.5 Q0 13 0 8 L0 3 Z" fill="#fff" stroke="#888" stroke-width="0.9"/><text x="6.0" y="10" font-size="6.5" font-family="Liberation Sans" fill="#333" text-anchor="middle">50</text></g><g transform="translate(132.0,181.5)"><path d="M1 1 Q6.0 2.5 11 1 L12 3 L12 8 Q12 13 6.0 13.5 Q0 13 0 8 L0 3 Z" fill="#fff" stroke="#888" stroke-width="0.9"/><text x="6.0" y="10" font-size="6.5" font-family="Liberation Sans" fill="#333" text-anchor="middle">1</text></g><g transform="translate(13.899999999999977,187.29999999999995)"><path d="M1 1 Q7.5 2.5 14 1 L15 3 L15 8 Q15 13 7.5 13.5 Q0 13 0 8 L0 3 Z" fill="#fff" stroke="#888" stroke-width="0.9"/><text x="7.5" y="10" font-size="6.5" font-family="Liberation Sans" fill="#333" text-anchor="middle">211</text></g><g transform="translate(338.5,41.60000000000002)"><path d="M1 1 Q7.5 2.5 14 1 L15 3 L15 8 Q15 13 7.5 13.5 Q0 13 0 8 L0 3 Z" fill="#fff" stroke="#888" stroke-width="0.9"/><text x="7.5" y="10" font-size="6.5" font-family="Liberation Sans" fill="#333" text-anchor="middle">301</text></g><g transform="translate(165.5,201)"><path d="M1 1 Q7.5 2.5 14 1 L15 3 L15 8 Q15 13 7.5 13.5 Q0 13 0 8 L0 3 Z" fill="#fff" stroke="#888" stroke-width="0.9"/><text x="7.5" y="10" font-size="6.5" font-family="Liberation Sans" fill="#333" text-anchor="middle">301</text></g><g transform="translate(365.20000000000005,138.70000000000005)"><path d="M1 1 Q6.0 2.5 11 1 L12 3 L12 8 Q12 13 6.0 13.5 Q0 13 0 8 L0 3 Z" fill="#fff" stroke="#888" stroke-width="0.9"/><text x="6.0" y="10" font-size="6.5" font-family="Liberation Sans" fill="#333" text-anchor="middle">13</text></g><g transform="translate(313.9000000000001,216.5)"><path d="M1 1 Q6.0 2.5 11 1 L12 3 L12 8 Q12 13 6.0 13.5 Q0 13 0 8 L0 3 Z" fill="#fff" stroke="#888" stroke-width="0.9"/><text x="6.0" y="10" font-size="6.5" font-family="Liberation Sans" fill="#333" text-anchor="middle">50</text></g><g transform="translate(396.29999999999995,241.70000000000005)"><path d="M1 1 Q6.0 2.5 11 1 L12 3 L12 8 Q12 13 6.0 13.5 Q0 13 0 8 L0 3 Z" fill="#fff" stroke="#888" stroke-width="0.9"/><text x="6.0" y="10" font-size="6.5" font-family="Liberation Sans" fill="#333" text-anchor="middle">50</text></g><g transform="translate(462.29999999999995,33.80000000000001)"><path d="M1 1 Q6.0 2.5 11 1 L12 3 L12 8 Q12 13 6.0 13.5 Q0 13 0 8 L0 3 Z" fill="#fff" stroke="#888" stroke-width="0.9"/><text x="6.0" y="10" font-size="6.5" font-family="Liberation Sans" fill="#333" text-anchor="middle">40</text></g><path d="M248.6 155.0 L260.0 165.0 L274.0 162.0" fill="none" stroke="#111" stroke-width="1.5"/><path d="M229.0 126.0 L245.0 123.0 L255.0 130.0 L247.0 140.0 L237.0 137.0 Z" fill="#0a1ff5" stroke="#000" stroke-width="1"/><g transform="translate(248.5999999999999,141)"><path d="M0 13 C-2.5 9 -8 5 -8 -1 A8 8 0 0 1 8 -1 C8 5 2.5 9 0 13 Z" fill="#0a1ff5" stroke="#000" stroke-width="1"/><circle cx="0" cy="-1" r="4.6" fill="#fff"/><circle cx="0" cy="-1" r="3.4" fill="#1f8a32"/><circle cx="-0.6" cy="-1.6" r="1.4" fill="#08300f"/></g><g transform="translate(271.70000000000005,146)"><path d="M0 13 C-2.5 9 -8 5 -8 -1 A8 8 0 0 1 8 -1 C8 5 2.5 9 0 13 Z" fill="#0a1ff5" stroke="#000" stroke-width="1"/><circle cx="0" cy="-1" r="4.6" fill="#fff"/><circle cx="0" cy="-1" r="3.4" fill="#1f8a32"/><circle cx="-0.6" cy="-1.6" r="1.4" fill="#08300f"/></g><g transform="translate(259,150)"><path d="M0 13 C-2.5 9 -8 5 -8 -1 A8 8 0 0 1 8 -1 C8 5 2.5 9 0 13 Z" fill="#0a1ff5" stroke="#000" stroke-width="1"/><circle cx="0" cy="-1" r="4.6" fill="#fff"/><circle cx="0" cy="-1" r="3.4" fill="#1f8a32"/><circle cx="-0.6" cy="-1.6" r="1.4" fill="#08300f"/></g></svg><div class="a" style="left:435px;top:8px;width:32px;height:32px;background:#fff;border-radius:2px;box-shadow:0 1px 4px rgba(0,0,0,.3)"><svg class="a" style="left:9px;top:9px" width="14" height="14" viewBox="0 0 14 14"><path d="M1 4.5 V1 H4.5 M9.5 1 H13 V4.5 M13 9.5 V13 H9.5 M4.5 13 H1 V9.5" fill="none" stroke="#666" stroke-width="1.8"/></svg></div><div class="a" style="left:435px;top:48.5px;width:33px;height:31px;background:#fff;border-radius:2px;border:1px solid #bbb;box-shadow:0 1px 3px rgba(0,0,0,.25)"><svg class="a" style="left:4px;top:6px" width="26" height="18" viewBox="0 0 26 18"><circle cx="9" cy="9" r="6.5" fill="none" stroke="#222" stroke-width="1.6"/><path d="M9 5 V9 L12 11" fill="none" stroke="#222" stroke-width="1.4"/><path d="M17 6 L25 6 L21 11 Z" fill="#666"/></svg></div><div class="a" style="left:435px;top:138px;width:32px;height:32px;background:#fff;border-radius:2px;box-shadow:0 1px 4px rgba(0,0,0,.3)"><svg class="a" style="left:8px;top:4px" width="16" height="25" viewBox="0 0 16 25"><circle cx="8" cy="4.5" r="3.8" fill="#fbbc05"/><path d="M3 10 Q8 8 13 10 L13.5 17 L11 17 L11 24 L9 24 L9 18 L7 18 L7 24 L5 24 L5 17 L2.5 17 Z" fill="#fbbc05"/><path d="M6.5 9.5 L8 12 L9.5 9.5" fill="#e8711b"/></svg></div><div class="a" style="left:435px;top:195px;width:32px;height:65px;background:#fff;border-radius:2px;box-shadow:0 1px 4px rgba(0,0,0,.3)"><svg class="a" style="left:0;top:0" width="32" height="65" viewBox="0 0 32 65"><path d="M9 16 H23 M16 9 V23" stroke="#666" stroke-width="2.8"/><path d="M6 32.5 H26" stroke="#e6e6e6" stroke-width="1"/><path d="M9 49 H23" stroke="#666" stroke-width="2.8"/></svg></div><svg class="a" style="left:250px;top:127px" width="20" height="10" viewBox="0 0 20 10"><path d="M0 0 L10 9.5 L20 0 Z" fill="#fff"/></svg><div class="a" style="left:182px;top:76px;width:156px;height:52px;background:#fff;border-radius:8px;box-shadow:0 2px 7px rgba(0,0,0,.3)"><div class="a" style="left:9.5px;top:9.5px;font-size:9.3px;line-height:11px;color:#222">Updated At: 2022-07-04 19:30:00</div><div class="a" style="left:9.5px;top:30px;font-size:9.3px;line-height:11px;color:#222">Latitude / Longitude:38.84 / -76.33</div><svg class="a" style="left:145px;top:4px" width="8" height="8" viewBox="0 0 8 8"><path d="M1 1 L7 7 M7 1 L1 7" stroke="#555" stroke-width="1"/></svg></div><div class="a" style="left:94px;top:269px;width:381px;height:10.5px;background:rgba(245,245,245,.75)"></div><div class="a" style="left:101px;top:269px;font-size:7.9px;line-height:10.5px;color:#333">Keyboard shortcuts</div><div class="a" style="left:179px;top:269px;font-size:7.9px;line-height:10.5px;color:#333">Map data ©2022 Google</div><div class="a" style="left:271px;top:269px;width:1px;height:11px;background:#ddd"></div><div class="a" style="left:276px;top:269px;font-size:7.9px;line-height:10.5px;color:#333">20 km</div><svg class="a" style="left:301px;top:272px" width="36" height="6" viewBox="0 0 36 6"><path d="M1 0 V5 H35 V0" fill="none" stroke="#444" stroke-width="1"/></svg><div class="a" style="left:341px;top:269px;width:1px;height:11px;background:#ddd"></div><div class="a" style="left:347px;top:269px;font-size:7.9px;line-height:10.5px;color:#333">Terms of Use</div><div class="a" style="left:403px;top:269px;font-size:7.9px;line-height:10.5px;color:#333">Report a map error</div><div class="a" style="left:9px;top:260.5px;font-size:13.6px;line-height:16px;font-weight:bold;letter-spacing:-0.4px"><span style="color:#4285f4">G</span><span style="color:#ea4335">o</span><span style="color:#fbbc05">o</span><span style="color:#4285f4">g</span><span style="color:#34a853">l</span><span style="color:#ea4335">e</span></div><!-- /MAP --></div>
</div>
<div class="ttl" style="left:1006px;top:394px;font-size:11.4px">Geolocation</div>
<div class="a b" style="left:1006px;top:414px;font-size:9.9px;line-height:12px;color:#777">Nearest City <span style="color:#333">Annapolis, United States</span></div>
<div class="a" style="left:1364px;top:394px;width:91px;height:20px;border:1px solid #b9cfe6;border-radius:10px;background:#fff"></div>
<div class="a b" style="left:1370px;top:398px;font-size:10px;line-height:12px;color:#1b4d80">Others</div>
<svg class="a" style="left:1439px;top:400px" width="11" height="8" viewBox="0 0 11 8"><path d="M1.5 1.5 L5.5 5.5 L9.5 1.5" fill="none" stroke="#1b4d80" stroke-width="1.7"/></svg>

</body></html>
